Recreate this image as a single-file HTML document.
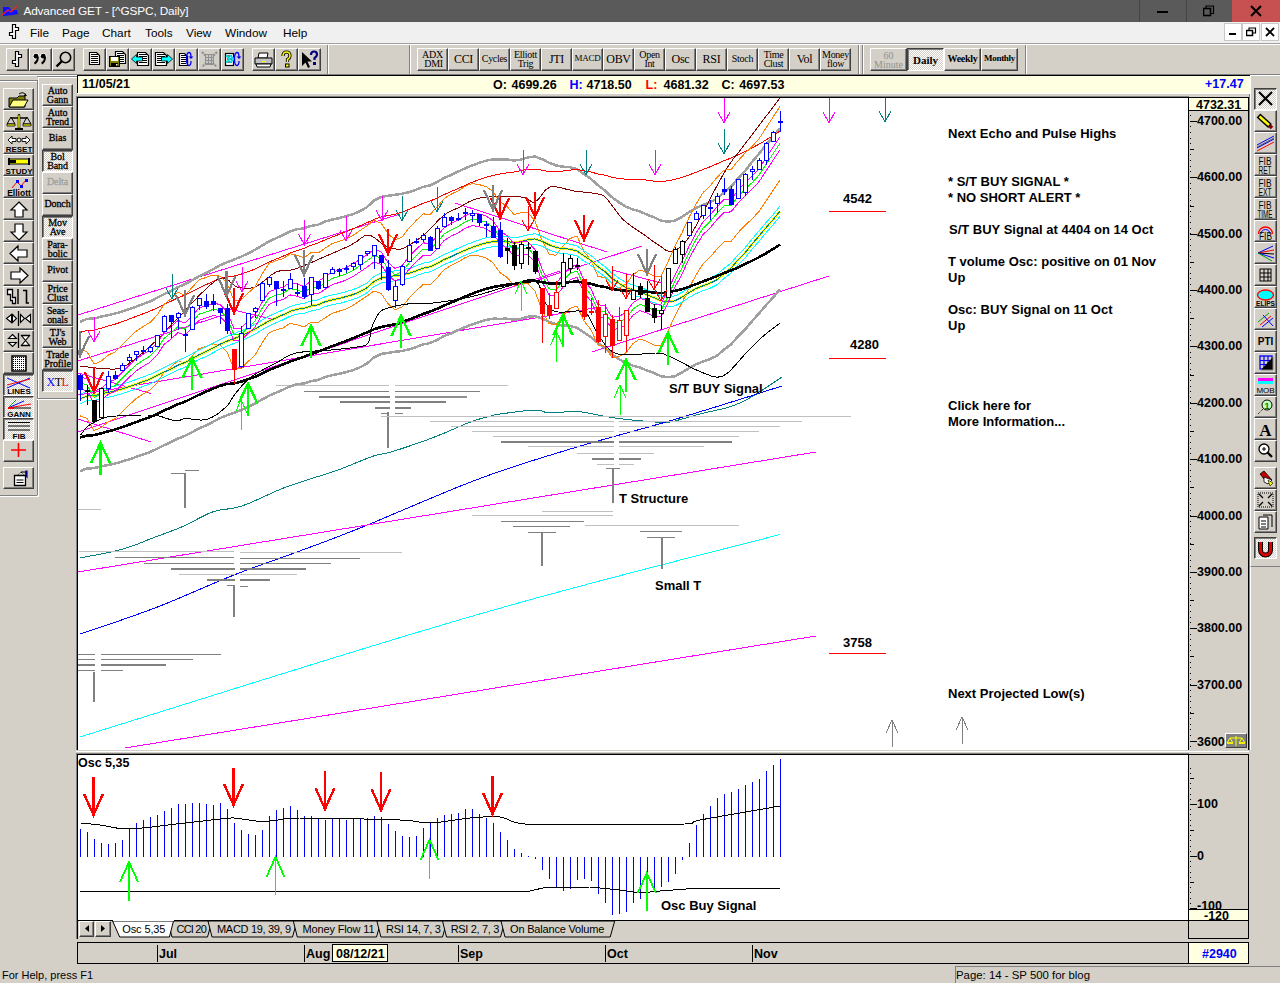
<!DOCTYPE html><html><head><meta charset="utf-8"><style>
*{margin:0;padding:0;box-sizing:border-box}
html,body{width:1280px;height:983px;overflow:hidden;background:#d4d0c8;font-family:"Liberation Sans",sans-serif;position:relative}
.ab{position:absolute}
.btn{position:absolute;background:#d4d0c8;border:1px solid;border-color:#fff #404040 #404040 #fff;box-shadow:inset -1px -1px #808080;overflow:hidden}
.prs{position:absolute;border:1px solid;border-color:#404040 #fff #fff #404040;box-shadow:inset 1px 1px #808080;background-color:#d4d0c8;background-image:repeating-conic-gradient(#fff 0 25%,transparent 0 50%);background-size:2px 2px;overflow:hidden}
.t{position:absolute;white-space:nowrap;line-height:1}
.sf{font-family:"Liberation Serif",serif}
.ic{position:absolute;left:0;top:0}
</style></head><body>
<div class="ab" style="left:0px;top:0px;width:1280px;height:22px;background:#5a5a5a;"></div>
<svg class="ab" style="left:2px;top:5px" width="18" height="12" viewBox="0 0 18 12"><path d="M1 2 L7 2 L9 5 L15 5 L16 9 L11 10 L1 11Z" fill="#1010ff"/><path d="M0 10 L6 5 L9 7 L15 1" stroke="#ff2020" stroke-width="1.2" fill="none"/></svg>
<div class="t" style="left:23.4px;top:5.5px;font-size:11.8px;color:#fff;letter-spacing:-0.12px">Advanced GET - [^GSPC, Daily]</div>
<div class="ab" style="left:1139px;top:0;width:1px;height:22px;background:#444"></div>
<div class="ab" style="left:1186px;top:0;width:1px;height:22px;background:#444"></div>
<div class="ab" style="left:1232px;top:0px;width:48px;height:22px;background:#c75050;"></div>
<div class="ab" style="left:1157px;top:11px;width:11px;height:2px;background:#000;"></div>
<svg class="ab" style="left:1203px;top:5px" width="12" height="12"><rect x="0.5" y="3.5" width="7" height="7" fill="none" stroke="#000" stroke-width="1.6"/><path d="M3 3 V1 H10.5 V8.5 H8" fill="none" stroke="#000" stroke-width="1.2"/></svg>
<svg class="ab" style="left:1250px;top:5px" width="12" height="12"><path d="M1 1 L11 11 M11 1 L1 11" stroke="#000" stroke-width="2"/></svg>
<div class="ab" style="left:0px;top:22px;width:1280px;height:21px;background:#f0f0f0;"></div>
<svg class="ab" style="left:6px;top:23px" width="16" height="18" viewBox="0 0 16 18"><path d="M6.5 1.5H9.5V4.5H12.5V7.5H9.5V15.5H6.5V12.5H3.5V9.5H6.5Z" fill="#fff" stroke="#000" stroke-width="1.2"/></svg>
<div class="t" style="left:30px;top:27.5px;font-size:11.8px;color:#000;">File</div>
<div class="t" style="left:62px;top:27.5px;font-size:11.8px;color:#000;">Page</div>
<div class="t" style="left:102px;top:27.5px;font-size:11.8px;color:#000;">Chart</div>
<div class="t" style="left:145px;top:27.5px;font-size:11.8px;color:#000;">Tools</div>
<div class="t" style="left:186px;top:27.5px;font-size:11.8px;color:#000;">View</div>
<div class="t" style="left:225px;top:27.5px;font-size:11.8px;color:#000;">Window</div>
<div class="t" style="left:283px;top:27.5px;font-size:11.8px;color:#000;">Help</div>
<div class="ab" style="left:1224px;top:23px;width:18px;height:18px;background:#fff;border:1px solid #c8c8c8"></div>
<div class="ab" style="left:1242px;top:23px;width:18px;height:18px;background:#fff;border:1px solid #c8c8c8"></div>
<div class="ab" style="left:1261px;top:23px;width:18px;height:18px;background:#fff;border:1px solid #c8c8c8"></div>
<div class="ab" style="left:1229px;top:33px;width:7px;height:2px;background:#000;"></div>
<svg class="ab" style="left:1246px;top:27px" width="11" height="11"><rect x="0.5" y="3.5" width="6" height="5" fill="none" stroke="#000" stroke-width="1.5"/><path d="M3 3V1H9.5V6H7" fill="none" stroke="#000" stroke-width="1.2"/></svg>
<svg class="ab" style="left:1265px;top:27px" width="11" height="11"><path d="M1 1L9 9M9 1L1 9" stroke="#000" stroke-width="1.8"/></svg>
<div class="ab" style="left:0px;top:43px;width:1280px;height:1px;background:#a0a0a0;"></div>
<div class="ab" style="left:0px;top:44px;width:1280px;height:1px;background:#fff;"></div>
<div class="ab" style="left:0px;top:74px;width:1280px;height:1px;background:#808080;"></div>
<div class="ab" style="left:327px;top:45px;width:1px;height:29px;background:#808080;"></div>
<div class="ab" style="left:328px;top:45px;width:1px;height:29px;background:#fff;"></div>
<div class="ab" style="left:409px;top:45px;width:1px;height:29px;background:#808080;"></div>
<div class="ab" style="left:410px;top:45px;width:1px;height:29px;background:#fff;"></div>
<div class="ab" style="left:858px;top:45px;width:1px;height:29px;background:#808080;"></div>
<div class="ab" style="left:859px;top:45px;width:1px;height:29px;background:#fff;"></div>
<div class="ab" style="left:862px;top:45px;width:1px;height:29px;background:#808080;"></div>
<div class="ab" style="left:863px;top:45px;width:1px;height:29px;background:#fff;"></div>
<div class="ab" style="left:1025px;top:45px;width:1px;height:29px;background:#808080;"></div>
<div class="ab" style="left:1026px;top:45px;width:1px;height:29px;background:#fff;"></div>
<div class="btn" style="left:6px;top:48px;width:23px;height:23px"><svg class="ic" style="left:0px;top:0px" width="21" height="21" viewBox="0 0 21 21"><path d="M8.5 2.5H11.5V5.5H14.5V8.5H11.5V17.5H8.5V14.5H5.5V11.5H8.5Z" fill="#fff" stroke="#000" stroke-width="1.2"/></svg></div>
<div class="btn" style="left:29px;top:48px;width:23px;height:23px"><svg class="ic" style="left:0px;top:0px" width="21" height="21" viewBox="0 0 21 21"><g stroke="#fff" stroke-width="1" opacity="0.9"><circle cx="6" cy="7.2" r="2.9" fill="none"/><circle cx="13.2" cy="7.2" r="2.9" fill="none"/></g><circle cx="6" cy="7.2" r="2.4" fill="#000"/><path d="M7.8 8 Q8 12 4.5 14.6" stroke="#000" stroke-width="2" fill="none"/><circle cx="13.2" cy="7.2" r="2.4" fill="#000"/><path d="M15 8 Q15.2 12 11.7 14.6" stroke="#000" stroke-width="2" fill="none"/></svg></div>
<div class="btn" style="left:52px;top:48px;width:23px;height:23px"><svg class="ic" style="left:0px;top:0px" width="21" height="21" viewBox="0 0 21 21"><circle cx="12.5" cy="8.5" r="5.2" fill="none" stroke="#000" stroke-width="1.6"/><path d="M9 12 L3.5 17.5" stroke="#000" stroke-width="2.4"/></svg></div>
<div class="btn" style="left:83px;top:48px;width:23px;height:23px"><svg class="ic" style="left:0px;top:0px" width="21" height="21" viewBox="0 0 21 21"><path d="M5.5 3.5H12.5L15.5 6.5V15.5H5.5Z" fill="#fff" stroke="#000" stroke-width="1.2"/><path d="M7 5.5H14" stroke="#000" stroke-width="1"/><path d="M7 7.5H14" stroke="#000" stroke-width="1"/><path d="M7 9.5H14" stroke="#000" stroke-width="1"/><path d="M7 11.5H14" stroke="#000" stroke-width="1"/><path d="M7 13.5H14" stroke="#000" stroke-width="1"/></svg></div>
<div class="btn" style="left:106px;top:48px;width:23px;height:23px"><svg class="ic" style="left:0px;top:0px" width="21" height="21" viewBox="0 0 21 21"><path d="M8.5 2.5H15.5L18.5 5.5V14.5H8.5Z" fill="#fff" stroke="#000" stroke-width="1.2"/><path d="M10 4.5H17" stroke="#000" stroke-width="1"/><path d="M10 6.5H17" stroke="#000" stroke-width="1"/><path d="M10 8.5H17" stroke="#000" stroke-width="1"/><path d="M10 10.5H17" stroke="#000" stroke-width="1"/><path d="M10 12.5H17" stroke="#000" stroke-width="1"/><rect x="2.5" y="7.5" width="10" height="10" fill="#808000" stroke="#000"/><rect x="4" y="8" width="7" height="4" fill="#fff"/><rect x="4" y="14" width="7" height="3.5" fill="#000"/><rect x="9" y="15" width="1.5" height="1.5" fill="#fff"/></svg></div>
<div class="btn" style="left:129px;top:48px;width:23px;height:23px"><svg class="ic" style="left:0px;top:0px" width="21" height="21" viewBox="0 0 21 21"><path d="M7.5 3.5H15.5L18.5 6.5V16.5H7.5Z" fill="#fff" stroke="#000" stroke-width="1.2"/><path d="M9 5.5H17" stroke="#000" stroke-width="1"/><path d="M9 7.5H17" stroke="#000" stroke-width="1"/><path d="M9 9.5H17" stroke="#000" stroke-width="1"/><path d="M9 11.5H17" stroke="#000" stroke-width="1"/><path d="M9 13.5H17" stroke="#000" stroke-width="1"/><path d="M1.5 10 L6.5 5.5 V8 H12.5 V12 H6.5 V14.5Z" fill="#00ffff" stroke="#000" stroke-width="0.8"/></svg></div>
<div class="btn" style="left:152px;top:48px;width:23px;height:23px"><svg class="ic" style="left:0px;top:0px" width="21" height="21" viewBox="0 0 21 21"><path d="M2.5 3.5H10.5L13.5 6.5V16.5H2.5Z" fill="#fff" stroke="#000" stroke-width="1.2"/><path d="M4 5.5H12" stroke="#000" stroke-width="1"/><path d="M4 7.5H12" stroke="#000" stroke-width="1"/><path d="M4 9.5H12" stroke="#000" stroke-width="1"/><path d="M4 11.5H12" stroke="#000" stroke-width="1"/><path d="M4 13.5H12" stroke="#000" stroke-width="1"/><path d="M19.5 10 L14.5 5.5 V8 H8.5 V12 H14.5 V14.5Z" fill="#00ffff" stroke="#000" stroke-width="0.8"/></svg></div>
<div class="btn" style="left:175px;top:48px;width:23px;height:23px"><svg class="ic" style="left:0px;top:0px" width="21" height="21" viewBox="0 0 21 21"><path d="M3.5 4.5H8.5L11.5 7.5V16.5H3.5Z" fill="#fff" stroke="#000" stroke-width="1.2"/><path d="M5 6.5H10" stroke="#000" stroke-width="1"/><path d="M5 8.5H10" stroke="#000" stroke-width="1"/><path d="M5 10.5H10" stroke="#000" stroke-width="1"/><path d="M5 12.5H10" stroke="#000" stroke-width="1"/><path d="M5 14.5H10" stroke="#000" stroke-width="1"/><path d="M13 3.5 Q10.5 3.5 10.5 10 Q10.5 16.5 13 16.5 Q15 16.5 15 12" stroke="#0000ff" stroke-width="1.3" fill="none"/><path d="M13 3.5 Q15 3.5 15 8" stroke="#0000ff" stroke-width="1.3" fill="none"/><path d="M12.5 7.5H17.5L15 10Z" fill="#0000ff"/></svg></div>
<div class="btn" style="left:198px;top:48px;width:23px;height:23px"><svg class="ic" style="left:0px;top:0px" width="21" height="21" viewBox="0 0 21 21"><path d="M3 3L18 18M18 3L3 18" stroke="#909090" stroke-width="2.2" stroke-dasharray="2 1"/><rect x="6" y="5" width="9" height="11" fill="#909090"/><path d="M7 7h7M7 10h7M7 13h7" stroke="#fff" stroke-dasharray="2 1"/></svg></div>
<div class="btn" style="left:221px;top:48px;width:23px;height:23px"><svg class="ic" style="left:0px;top:0px" width="21" height="21" viewBox="0 0 21 21"><rect x="3.5" y="4.5" width="8" height="12" fill="#fff" stroke="#000" stroke-width="1.2"/><path d="M5 7h5M5 10h5M5 13h5" stroke="#000"/><path d="M4 6.5l4 3.5l-4 3.5M8 6.5l4 3.5l-4 3.5" stroke="#00e0e0" stroke-width="1.8" fill="none"/><path d="M15 3.5 Q12.5 3.5 12.5 10 Q12.5 16.5 15 16.5 Q17 16.5 17 12" stroke="#0000ff" stroke-width="1.3" fill="none"/><path d="M15 3.5 Q17 3.5 17 8" stroke="#0000ff" stroke-width="1.3" fill="none"/><path d="M14.5 7.5H19.5L17 10Z" fill="#0000ff"/></svg></div>
<div class="btn" style="left:252px;top:48px;width:23px;height:23px"><svg class="ic" style="left:0px;top:0px" width="21" height="21" viewBox="0 0 21 21"><path d="M6 4h9l-1 5H5z" fill="#fff" stroke="#000"/><path d="M2 9h17v6H2z" fill="#c0c0c0" stroke="#000"/><path d="M3 15h15l-1 3H4z" fill="#fff" stroke="#000"/><rect x="9" y="12" width="4" height="1" fill="#ff0"/></svg></div>
<div class="btn" style="left:275px;top:48px;width:23px;height:23px"><svg class="ic" style="left:0px;top:0px" width="21" height="21" viewBox="0 0 21 21"><path d="M7 7 Q7 3 10.5 3 Q14 3 14 7 Q14 9 11.5 10.5 V13" stroke="#000" stroke-width="3.2" fill="none"/><path d="M7 7 Q7 3 10.5 3 Q14 3 14 7 Q14 9 11.5 10.5 V13" stroke="#ffff00" stroke-width="1.5" fill="none"/><rect x="9.5" y="15" width="3.5" height="3" fill="#ffff00" stroke="#000"/></svg></div>
<div class="btn" style="left:298px;top:48px;width:23px;height:23px"><svg class="ic" style="left:0px;top:0px" width="21" height="21" viewBox="0 0 21 21"><path d="M3 3V17L6.5 13.5L9 19L11 18L8.5 12.5H13Z" fill="#000"/><path d="M12 6 Q12 2.5 15 2.5 Q18 2.5 18 5.5 Q18 7.5 15.5 9 V11" stroke="#000080" stroke-width="2.2" fill="none"/><rect x="14" y="13" width="3" height="3" fill="#000080"/></svg></div>
<div class="btn" style="left:417px;top:48px;width:31px;height:23px"><div class="t sf" style="left:0;top:1px;width:29px;text-align:center;font-size:10px;line-height:9px;letter-spacing:-0.3px">ADX<br>&nbsp;DMI</div></div>
<div class="btn" style="left:448px;top:48px;width:31px;height:23px"><div class="t sf" style="left:0;top:4px;width:29px;text-align:center;font-size:12px;letter-spacing:-0.3px">CCI</div></div>
<div class="btn" style="left:479px;top:48px;width:31px;height:23px"><div class="t sf" style="left:0;top:5px;width:29px;text-align:center;font-size:10px;letter-spacing:-0.3px">Cycles</div></div>
<div class="btn" style="left:510px;top:48px;width:31px;height:23px"><div class="t sf" style="left:0;top:1px;width:29px;text-align:center;font-size:10px;line-height:9px;letter-spacing:-0.3px">Elliott<br>Trig</div></div>
<div class="btn" style="left:541px;top:48px;width:31px;height:23px"><div class="t sf" style="left:0;top:4px;width:29px;text-align:center;font-size:12px;letter-spacing:-0.3px">JTI</div></div>
<div class="btn" style="left:572px;top:48px;width:31px;height:23px"><div class="t sf" style="left:0;top:5px;width:29px;text-align:center;font-size:9px;letter-spacing:-0.3px">MACD</div></div>
<div class="btn" style="left:603px;top:48px;width:31px;height:23px"><div class="t sf" style="left:0;top:4px;width:29px;text-align:center;font-size:12px;letter-spacing:-0.3px">OBV</div></div>
<div class="btn" style="left:634px;top:48px;width:31px;height:23px"><div class="t sf" style="left:0;top:1px;width:29px;text-align:center;font-size:10px;line-height:9px;letter-spacing:-0.3px">Open<br>Int</div></div>
<div class="btn" style="left:665px;top:48px;width:31px;height:23px"><div class="t sf" style="left:0;top:4px;width:29px;text-align:center;font-size:12px;letter-spacing:-0.3px">Osc</div></div>
<div class="btn" style="left:696px;top:48px;width:31px;height:23px"><div class="t sf" style="left:0;top:4px;width:29px;text-align:center;font-size:12px;letter-spacing:-0.3px">RSI</div></div>
<div class="btn" style="left:727px;top:48px;width:31px;height:23px"><div class="t sf" style="left:0;top:5px;width:29px;text-align:center;font-size:10px;letter-spacing:-0.3px">Stoch</div></div>
<div class="btn" style="left:758px;top:48px;width:31px;height:23px"><div class="t sf" style="left:0;top:1px;width:29px;text-align:center;font-size:10px;line-height:9px;letter-spacing:-0.3px">Time<br>Clust</div></div>
<div class="btn" style="left:789px;top:48px;width:31px;height:23px"><div class="t sf" style="left:0;top:4px;width:29px;text-align:center;font-size:12px;letter-spacing:-0.3px">Vol</div></div>
<div class="btn" style="left:820px;top:48px;width:31px;height:23px"><div class="t sf" style="left:0;top:1px;width:29px;text-align:center;font-size:10px;line-height:9px;letter-spacing:-0.3px">Money<br>flow</div></div>
<div class="btn" style="left:870px;top:48px;width:37px;height:23px"><div class="t sf" style="left:0;top:2px;width:35px;text-align:center;font-size:10px;line-height:9px;color:#909090">60<br>Minute</div></div>
<div class="prs" style="left:907px;top:48px;width:37px;height:23px"><div class="t sf" style="left:0;top:6px;width:35px;text-align:center;font-size:11px;font-weight:bold">Daily</div></div>
<div class="btn" style="left:944px;top:48px;width:37px;height:23px"><div class="t sf" style="left:0;top:5px;width:35px;text-align:center;font-size:10px;font-weight:bold;letter-spacing:-0.3px">Weekly</div></div>
<div class="btn" style="left:981px;top:48px;width:37px;height:23px"><div class="t sf" style="left:0;top:5px;width:35px;text-align:center;font-size:9px;font-weight:bold;letter-spacing:-0.3px">Monthly</div></div>
<div class="ab" style="left:0px;top:75px;width:77px;height:1px;background:#fff;"></div>
<div class="ab" style="left:1249px;top:75px;width:31px;height:1px;background:#fff;"></div>
<div class="ab" style="left:0px;top:80px;width:37px;height:1px;background:#808080;"></div>
<div class="ab" style="left:0px;top:81px;width:37px;height:1px;background:#fff;"></div>
<div class="ab" style="left:37px;top:80px;width:1px;height:415px;background:#808080;"></div>
<div class="ab" style="left:38px;top:81px;width:1px;height:416px;background:#fff;"></div>
<div class="ab" style="left:0px;top:495px;width:37px;height:1px;background:#808080;"></div>
<div class="ab" style="left:0px;top:496px;width:39px;height:1px;background:#fff;"></div>
<div class="ab" style="left:37px;top:76px;width:40px;height:1px;background:#808080;"></div>
<div class="ab" style="left:38px;top:77px;width:39px;height:1px;background:#fff;"></div>
<div class="ab" style="left:38px;top:77px;width:1px;height:322px;background:#fff;"></div>
<div class="ab" style="left:37px;top:398px;width:40px;height:1px;background:#808080;"></div>
<div class="ab" style="left:37px;top:399px;width:40px;height:1px;background:#fff;"></div>
<div class="btn" style="left:3px;top:88px;width:31px;height:22px"><svg class="ic" style="left:0px;top:0px" width="29" height="20" viewBox="0 0 29 20"><path d="M5 9h8l2-2h6v11H5z" fill="#808000" stroke="#000"/><path d="M5 18L9 11H24L20 18Z" fill="#ffff80" stroke="#000"/><path d="M15 5 Q19 2 22 6" stroke="#000" fill="none"/><path d="M21 4l2 3l-3 0z" fill="#000"/></svg></div>
<div class="btn" style="left:3px;top:110px;width:31px;height:22px"><svg class="ic" style="left:0px;top:0px" width="29" height="20" viewBox="0 0 29 20"><path d="M15 3V18M7 7H23" stroke="#000" stroke-width="1.5"/><path d="M14 4h2v13h-2z" fill="#ff0" stroke="#000" stroke-width="0.6"/><path d="M3 13 L7 6 L11 13Z M19 13 L23 6 L27 13Z" fill="none" stroke="#000"/><path d="M3 13h8v2H3zM19 13h8v2h-8z" fill="#ff0" stroke="#000" stroke-width="0.8"/><path d="M11 18h8" stroke="#000" stroke-width="2"/></svg></div>
<div class="btn" style="left:3px;top:132px;width:31px;height:22px"><svg class="ic" style="left:0px;top:0px" width="29" height="20" viewBox="0 0 29 20"><path d="M4 7 L8 3 V5.5 H12 V8.5 H8 V11Z M26 7 L22 3 V5.5 H18 V8.5 H22 V11Z" fill="#fff" stroke="#000" stroke-width="0.9"/><circle cx="15" cy="7" r="2" fill="#fff" stroke="#000"/><text x="15" y="19" font-family="Liberation Sans" font-weight="bold" font-size="8" text-anchor="middle">RESET</text></svg></div>
<div class="btn" style="left:3px;top:154px;width:31px;height:22px"><svg class="ic" style="left:0px;top:0px" width="29" height="20" viewBox="0 0 29 20"><rect x="5" y="4" width="20" height="5" fill="#ff0" stroke="#000"/><rect x="4" y="3" width="2" height="7" fill="#000"/><rect x="24" y="3" width="2" height="7" fill="#000"/><rect x="6" y="5" width="6" height="3" fill="#000"/><text x="15" y="19" font-family="Liberation Sans" font-weight="bold" font-size="8" text-anchor="middle">STUDY</text></svg></div>
<div class="btn" style="left:3px;top:176px;width:31px;height:22px"><svg class="ic" style="left:0px;top:0px" width="29" height="20" viewBox="0 0 29 20"><path d="M8 11 L13 5 L17 9 L22 3" stroke="#ff0000" fill="none"/><rect x="12" y="3" width="3" height="3" fill="#0000ff"/><rect x="16" y="8" width="3" height="3" fill="#0000ff"/><rect x="21" y="2" width="3" height="3" fill="#0000ff"/><text x="15" y="19" font-family="Liberation Sans" font-weight="bold" font-size="8.5" text-anchor="middle">Elliott</text></svg></div>
<div class="btn" style="left:3px;top:198px;width:31px;height:22px"><svg class="ic" style="left:0px;top:0px" width="29" height="20" viewBox="0 0 29 20"><path d="M15 3 L23 11 H19 V18 H11 V11 H7Z" fill="#fff" stroke="#000" stroke-width="1.2"/></svg></div>
<div class="btn" style="left:3px;top:220px;width:31px;height:22px"><svg class="ic" style="left:0px;top:0px" width="29" height="20" viewBox="0 0 29 20"><path d="M15 19 L23 11 H19 V3 H11 V11 H7Z" fill="#fff" stroke="#000" stroke-width="1.2"/></svg></div>
<div class="btn" style="left:3px;top:242px;width:31px;height:22px"><svg class="ic" style="left:0px;top:0px" width="29" height="20" viewBox="0 0 29 20"><path d="M6 10.5 L14 3 V7 H23 V14 H14 V18Z" fill="#fff" stroke="#000" stroke-width="1.2"/></svg></div>
<div class="btn" style="left:3px;top:264px;width:31px;height:22px"><svg class="ic" style="left:0px;top:0px" width="29" height="20" viewBox="0 0 29 20"><path d="M24 10.5 L16 3 V7 H7 V14 H16 V18Z" fill="#fff" stroke="#000" stroke-width="1.2"/></svg></div>
<div class="btn" style="left:3px;top:286px;width:31px;height:22px"><svg class="ic" style="left:0px;top:0px" width="29" height="20" viewBox="0 0 29 20"><path d="M3.5 2.5H8.5V10.5H11.5V16.5H8.5V13.5H6.5V7.5H3.5Z" fill="#fff" stroke="#000" stroke-width="1.3"/><path d="M14 2V17" stroke="#000" stroke-width="1.4"/><path d="M19 3.5H22.5V16H25" stroke="#000" stroke-width="1.6" fill="none"/></svg></div>
<div class="btn" style="left:3px;top:308px;width:31px;height:22px"><svg class="ic" style="left:0px;top:0px" width="29" height="20" viewBox="0 0 29 20"><path d="M2.5 9.5L7.5 5.5V13.5Z M8.5 5.5L12.5 9.5L8.5 13.5Z M16.5 5.5L20.5 9.5L16.5 13.5Z M26.5 5.5V13.5L21.5 9.5Z" fill="#fff" stroke="#000" stroke-width="1.1"/><path d="M14.5 2V17" stroke="#000" stroke-width="1.3"/></svg></div>
<div class="btn" style="left:3px;top:330px;width:31px;height:22px"><svg class="ic" style="left:0px;top:0px" width="29" height="20" viewBox="0 0 29 20"><path d="M8.5 3.5L12.5 7.5H4.5Z M4.5 11.5H12.5L8.5 15.5Z" fill="#fff" stroke="#000" stroke-width="1.1"/><path d="M14.5 2V17" stroke="#000" stroke-width="1.3"/><path d="M17.5 4.5H25.5L21.5 9.5L25.5 14.5H17.5L21.5 9.5Z" fill="#fff" stroke="#000" stroke-width="1.1"/><path d="M17 4.5H26M17 14.5H26" stroke="#000" stroke-width="1.3"/></svg></div>
<div class="btn" style="left:3px;top:352px;width:31px;height:22px"><svg class="ic" style="left:0px;top:0px" width="29" height="20" viewBox="0 0 29 20"><rect x="8" y="3" width="14" height="15" fill="#fff" stroke="#000" stroke-width="1.5"/><rect x="9" y="4" width="1" height="1" fill="#000"/><rect x="9" y="6" width="1" height="1" fill="#000"/><rect x="9" y="8" width="1" height="1" fill="#000"/><rect x="9" y="10" width="1" height="1" fill="#000"/><rect x="9" y="12" width="1" height="1" fill="#000"/><rect x="9" y="14" width="1" height="1" fill="#000"/><rect x="9" y="16" width="1" height="1" fill="#000"/><rect x="11" y="4" width="1" height="1" fill="#000"/><rect x="11" y="6" width="1" height="1" fill="#000"/><rect x="11" y="8" width="1" height="1" fill="#000"/><rect x="11" y="10" width="1" height="1" fill="#000"/><rect x="11" y="12" width="1" height="1" fill="#000"/><rect x="11" y="14" width="1" height="1" fill="#000"/><rect x="11" y="16" width="1" height="1" fill="#000"/><rect x="13" y="4" width="1" height="1" fill="#000"/><rect x="13" y="6" width="1" height="1" fill="#000"/><rect x="13" y="8" width="1" height="1" fill="#000"/><rect x="13" y="10" width="1" height="1" fill="#000"/><rect x="13" y="12" width="1" height="1" fill="#000"/><rect x="13" y="14" width="1" height="1" fill="#000"/><rect x="13" y="16" width="1" height="1" fill="#000"/><rect x="15" y="4" width="1" height="1" fill="#000"/><rect x="15" y="6" width="1" height="1" fill="#000"/><rect x="15" y="8" width="1" height="1" fill="#000"/><rect x="15" y="10" width="1" height="1" fill="#000"/><rect x="15" y="12" width="1" height="1" fill="#000"/><rect x="15" y="14" width="1" height="1" fill="#000"/><rect x="15" y="16" width="1" height="1" fill="#000"/><rect x="17" y="4" width="1" height="1" fill="#000"/><rect x="17" y="6" width="1" height="1" fill="#000"/><rect x="17" y="8" width="1" height="1" fill="#000"/><rect x="17" y="10" width="1" height="1" fill="#000"/><rect x="17" y="12" width="1" height="1" fill="#000"/><rect x="17" y="14" width="1" height="1" fill="#000"/><rect x="17" y="16" width="1" height="1" fill="#000"/><rect x="19" y="4" width="1" height="1" fill="#000"/><rect x="19" y="6" width="1" height="1" fill="#000"/><rect x="19" y="8" width="1" height="1" fill="#000"/><rect x="19" y="10" width="1" height="1" fill="#000"/><rect x="19" y="12" width="1" height="1" fill="#000"/><rect x="19" y="14" width="1" height="1" fill="#000"/><rect x="19" y="16" width="1" height="1" fill="#000"/><rect x="21" y="4" width="1" height="1" fill="#000"/><rect x="21" y="6" width="1" height="1" fill="#000"/><rect x="21" y="8" width="1" height="1" fill="#000"/><rect x="21" y="10" width="1" height="1" fill="#000"/><rect x="21" y="12" width="1" height="1" fill="#000"/><rect x="21" y="14" width="1" height="1" fill="#000"/><rect x="21" y="16" width="1" height="1" fill="#000"/></svg></div>
<div class="prs" style="left:3px;top:374px;width:31px;height:22px"><svg class="ic" style="left:0px;top:0px" width="29" height="20" viewBox="0 0 29 20"><path d="M3 3 L26 13 M3 13 L26 3" stroke="#0000ff"/><path d="M3 10 L26 4" stroke="#ff0000"/><text x="15" y="19" font-family="Liberation Sans" font-weight="bold" font-size="8" text-anchor="middle">LINES</text></svg></div>
<div class="prs" style="left:3px;top:396px;width:31px;height:22px"><svg class="ic" style="left:0px;top:0px" width="29" height="20" viewBox="0 0 29 20"><path d="M4 11 L12 3 M4 11 L20 4 M4 11 L27 7 M4 11 H27" stroke-width="1.2"/><path d="M4 11 L12 3" stroke="#00a000"/><path d="M4 11 L20 4" stroke="#0000ff"/><path d="M4 11 L27 7" stroke="#ff0000"/><path d="M4 11 H27" stroke="#000"/><path d="M4 11 H10" stroke="#ff0000" stroke-width="2"/><text x="15" y="19.5" font-family="Liberation Sans" font-weight="bold" font-size="8" text-anchor="middle">GANN</text></svg></div>
<div class="prs" style="left:3px;top:418px;width:31px;height:22px"><svg class="ic" style="left:0px;top:0px" width="29" height="20" viewBox="0 0 29 20"><path d="M4 3.5H26M4 7H26M4 11H26" stroke="#000" stroke-width="1.2"/><text x="15" y="19.5" font-family="Liberation Sans" font-weight="bold" font-size="8" text-anchor="middle">FIB</text></svg></div>
<div class="btn" style="left:3px;top:440px;width:31px;height:22px"><svg class="ic" style="left:0px;top:0px" width="29" height="20" viewBox="0 0 29 20"><path d="M14.5 2V16M7 9H22" stroke="#ff0000" stroke-width="1.6"/></svg></div>
<div class="btn" style="left:3px;top:467px;width:31px;height:22px"><svg class="ic" style="left:0px;top:0px" width="29" height="20" viewBox="0 0 29 20"><path d="M10.5 7.5h11v10h-11z" fill="#fff" stroke="#000" stroke-width="1.3"/><path d="M12.5 12h7M12.5 14.5h7" stroke="#000"/><path d="M13 8 L17 4 L21 8" fill="none" stroke="#000" stroke-dasharray="1 1"/><path d="M17 4h5v3" fill="none" stroke="#000"/><path d="M23 3 V9 L22 8V3Z" fill="#000080" stroke="#000080" stroke-width="1.2"/></svg></div>
<div class="btn" style="left:42px;top:84px;width:31px;height:22px"><div class="t sf" style="left:0;top:2px;width:29px;text-align:center;font-size:10px;line-height:8.5px;letter-spacing:-0.1px;color:#000;-webkit-text-stroke:0.3px #000">Auto<br>Gann</div></div>
<div class="btn" style="left:42px;top:106px;width:31px;height:22px"><div class="t sf" style="left:0;top:2px;width:29px;text-align:center;font-size:10px;line-height:8.5px;letter-spacing:-0.1px;color:#000;-webkit-text-stroke:0.3px #000">Auto<br>Trend</div></div>
<div class="btn" style="left:42px;top:128px;width:31px;height:22px"><div class="t sf" style="left:0;top:5px;width:29px;text-align:center;font-size:10px;line-height:8.5px;letter-spacing:-0.1px;color:#000;-webkit-text-stroke:0.3px #000">Bias</div></div>
<div class="prs" style="left:42px;top:150px;width:31px;height:22px"><div class="t sf" style="left:0;top:2px;width:29px;text-align:center;font-size:10px;line-height:8.5px;letter-spacing:-0.1px;color:#000;-webkit-text-stroke:0.3px #000">Bol<br>Band</div></div>
<div class="btn" style="left:42px;top:172px;width:31px;height:22px"><div class="t sf" style="left:0;top:5px;width:29px;text-align:center;font-size:10px;line-height:8.5px;letter-spacing:-0.1px;color:#a0a0a0;-webkit-text-stroke:0.3px #a0a0a0">Delta</div></div>
<div class="btn" style="left:42px;top:194px;width:31px;height:22px"><div class="t sf" style="left:0;top:5px;width:29px;text-align:center;font-size:10px;line-height:8.5px;letter-spacing:-0.1px;color:#000;-webkit-text-stroke:0.3px #000">Donch</div></div>
<div class="prs" style="left:42px;top:216px;width:31px;height:22px"><div class="t sf" style="left:0;top:2px;width:29px;text-align:center;font-size:10px;line-height:8.5px;letter-spacing:-0.1px;color:#000;-webkit-text-stroke:0.3px #000">Mov<br>Ave</div></div>
<div class="btn" style="left:42px;top:238px;width:31px;height:22px"><div class="t sf" style="left:0;top:2px;width:29px;text-align:center;font-size:10px;line-height:8.5px;letter-spacing:-0.1px;color:#000;-webkit-text-stroke:0.3px #000">Para-<br>bolic</div></div>
<div class="btn" style="left:42px;top:260px;width:31px;height:22px"><div class="t sf" style="left:0;top:5px;width:29px;text-align:center;font-size:10px;line-height:8.5px;letter-spacing:-0.1px;color:#000;-webkit-text-stroke:0.3px #000">Pivot</div></div>
<div class="btn" style="left:42px;top:282px;width:31px;height:22px"><div class="t sf" style="left:0;top:2px;width:29px;text-align:center;font-size:10px;line-height:8.5px;letter-spacing:-0.1px;color:#000;-webkit-text-stroke:0.3px #000">Price<br>Clust</div></div>
<div class="btn" style="left:42px;top:304px;width:31px;height:22px"><div class="t sf" style="left:0;top:2px;width:29px;text-align:center;font-size:10px;line-height:8.5px;letter-spacing:-0.1px;color:#000;-webkit-text-stroke:0.3px #000">Seas-<br>onals</div></div>
<div class="btn" style="left:42px;top:326px;width:31px;height:22px"><div class="t sf" style="left:0;top:2px;width:29px;text-align:center;font-size:10px;line-height:8.5px;letter-spacing:-0.1px;color:#000;-webkit-text-stroke:0.3px #000">TJ's<br>Web</div></div>
<div class="btn" style="left:42px;top:348px;width:31px;height:22px"><div class="t sf" style="left:0;top:2px;width:29px;text-align:center;font-size:10px;line-height:8.5px;letter-spacing:-0.1px;color:#000;-webkit-text-stroke:0.3px #000">Trade<br>Profile</div></div>
<div class="prs" style="left:42px;top:370px;width:31px;height:22px"><div class="t sf" style="left:0;top:5px;width:29px;text-align:center;font-size:12px;letter-spacing:-0.5px"><span style="color:#0000ff">X</span>T<span style="color:#ff0000">L</span></div></div>
<div class="ab" style="left:1249px;top:75px;width:1px;height:675px;background:#808080"></div>
<div class="ab" style="left:1250px;top:75px;width:30px;height:492px;border-top:1px solid #fff;border-left:1px solid #fff;border-bottom:1px solid #808080"></div>
<div class="prs" style="left:1254px;top:88px;width:23px;height:22px"><svg class="ic" style="left:0px;top:0px" width="21" height="20" viewBox="0 0 21 20"><path d="M4 3L17 16M17 3L4 16" stroke="#000" stroke-width="2.2"/></svg></div>
<div class="btn" style="left:1254px;top:110px;width:23px;height:22px"><svg class="ic" style="left:0px;top:0px" width="21" height="20" viewBox="0 0 21 20"><path d="M3.5 4.5 L15 15" stroke="#000" stroke-width="5.5"/><path d="M4.5 5.5 L14 14" stroke="#ff0" stroke-width="2.5"/><path d="M14.5 14.5 L17 17" stroke="#800000" stroke-width="3.5"/></svg></div>
<div class="btn" style="left:1254px;top:132px;width:23px;height:22px"><svg class="ic" style="left:0px;top:0px" width="21" height="20" viewBox="0 0 21 20"><path d="M2 12L19 3M2 15L19 6" stroke="#0000ff"/><path d="M2 18L19 9" stroke="#ff0000"/><path d="M2 14 L19 5" stroke="#000" stroke-width="0.5"/></svg></div>
<div class="btn" style="left:1254px;top:154px;width:23px;height:22px"><svg class="ic" style="left:0px;top:0px" width="21" height="20" viewBox="0 0 21 20"><text x="3.5" y="9.5" font-family="Liberation Sans" font-size="10" textLength="13" lengthAdjust="spacingAndGlyphs">FIB</text><text x="3.5" y="18.5" font-family="Liberation Sans" font-size="10" textLength="13" lengthAdjust="spacingAndGlyphs">RET</text></svg></div>
<div class="btn" style="left:1254px;top:176px;width:23px;height:22px"><svg class="ic" style="left:0px;top:0px" width="21" height="20" viewBox="0 0 21 20"><text x="3.5" y="9.5" font-family="Liberation Sans" font-size="10" textLength="13" lengthAdjust="spacingAndGlyphs">FIB</text><text x="3.5" y="18.5" font-family="Liberation Sans" font-size="10" textLength="13" lengthAdjust="spacingAndGlyphs">EXT</text></svg></div>
<div class="btn" style="left:1254px;top:198px;width:23px;height:22px"><svg class="ic" style="left:0px;top:0px" width="21" height="20" viewBox="0 0 21 20"><text x="3.5" y="9.5" font-family="Liberation Sans" font-size="10" textLength="13" lengthAdjust="spacingAndGlyphs">FIB</text><text x="2.5" y="18.5" font-family="Liberation Sans" font-size="10" textLength="15" lengthAdjust="spacingAndGlyphs">TIME</text></svg></div>
<div class="btn" style="left:1254px;top:220px;width:23px;height:22px"><svg class="ic" style="left:0px;top:0px" width="21" height="20" viewBox="0 0 21 20"><path d="M3.5 13 A7 7 0 0 1 17.5 13" stroke="#ff0000" fill="none" stroke-width="1.3"/><path d="M6 13 A4.5 4.5 0 0 1 15 13" stroke="#0000ff" fill="none"/><text x="4" y="19" font-family="Liberation Sans" font-size="10" textLength="13" lengthAdjust="spacingAndGlyphs">FIB</text></svg></div>
<div class="btn" style="left:1254px;top:242px;width:23px;height:22px"><svg class="ic" style="left:0px;top:0px" width="21" height="20" viewBox="0 0 21 20"><path d="M3 10L18 3" stroke="#0000ff"/><path d="M3 10L19 7" stroke="#ff0000"/><path d="M3 10L19 11" stroke="#000"/><path d="M3 10L19 15" stroke="#0000ff"/><path d="M3 10L17 18" stroke="#00a000"/></svg></div>
<div class="btn" style="left:1254px;top:264px;width:23px;height:22px"><svg class="ic" style="left:0px;top:0px" width="21" height="20" viewBox="0 0 21 20"><rect x="5" y="4" width="11" height="12" fill="none" stroke="#000"/><path d="M5 8H16M5 12H16M9 4V16M13 4V16" stroke="#000"/></svg></div>
<div class="btn" style="left:1254px;top:286px;width:23px;height:22px"><svg class="ic" style="left:0px;top:0px" width="21" height="20" viewBox="0 0 21 20"><ellipse cx="10.5" cy="8" rx="8" ry="5" fill="#00ffff" stroke="#ff0000" stroke-width="1.3"/><text x="10.5" y="18.5" font-family="Liberation Sans" font-weight="bold" font-size="6.5" text-anchor="middle">ELIPS</text></svg></div>
<div class="btn" style="left:1254px;top:308px;width:23px;height:22px"><svg class="ic" style="left:0px;top:0px" width="21" height="20" viewBox="0 0 21 20"><path d="M3 13L14 4M5 16L16 7M7 18L18 9" stroke-width="1"/><path d="M3 13L14 4" stroke="#00a000"/><path d="M5 16L16 7" stroke="#ff0000"/><path d="M7 18L18 9" stroke="#0000ff"/><path d="M8 6L18 17" stroke="#0000ff"/></svg></div>
<div class="btn" style="left:1254px;top:330px;width:23px;height:22px"><svg class="ic" style="left:0px;top:0px" width="21" height="20" viewBox="0 0 21 20"><text x="10.5" y="14" font-family="Liberation Sans" font-weight="bold" font-size="10" text-anchor="middle">PTI</text></svg></div>
<div class="btn" style="left:1254px;top:352px;width:23px;height:22px"><svg class="ic" style="left:0px;top:0px" width="21" height="20" viewBox="0 0 21 20"><rect x="5" y="3" width="12" height="13" fill="none" stroke="#0000ff" stroke-width="1.3"/><path d="M5 7.5H17M5 11.5H17M9 3V16M13 3V16" stroke="#0000ff" stroke-width="1.2"/><path d="M6 17H18V4" stroke="#808080"/></svg></div>
<div class="btn" style="left:1254px;top:374px;width:23px;height:22px"><svg class="ic" style="left:0px;top:0px" width="21" height="20" viewBox="0 0 21 20"><rect x="3" y="3" width="15" height="3" fill="#ff00ff"/><rect x="3" y="6" width="15" height="3" fill="#00ffff"/><text x="10.5" y="18" font-family="Liberation Sans" font-size="8" text-anchor="middle">MOB</text></svg></div>
<div class="btn" style="left:1254px;top:396px;width:23px;height:22px"><svg class="ic" style="left:0px;top:0px" width="21" height="20" viewBox="0 0 21 20"><circle cx="12" cy="8" r="5" fill="#c0ffc0" stroke="#000"/><text x="12" y="12" font-family="Liberation Sans" font-weight="bold" font-size="9" fill="#008000" text-anchor="middle">1</text><path d="M8 12 L3 17" stroke="#000" stroke-dasharray="1 1"/></svg></div>
<div class="btn" style="left:1254px;top:418px;width:23px;height:22px"><svg class="ic" style="left:0px;top:0px" width="21" height="20" viewBox="0 0 21 20"><text x="10.5" y="17" font-family="Liberation Serif" font-weight="bold" font-size="17" text-anchor="middle">A</text></svg></div>
<div class="btn" style="left:1254px;top:440px;width:23px;height:22px"><svg class="ic" style="left:0px;top:0px" width="21" height="20" viewBox="0 0 21 20"><circle cx="9" cy="8" r="5" fill="#fff" stroke="#000" stroke-width="1.3"/><path d="M7 8H11M9 6V10" stroke="#000"/><path d="M12.5 11.5L17 16" stroke="#000" stroke-width="2.3"/></svg></div>
<div class="btn" style="left:1254px;top:467px;width:23px;height:22px"><svg class="ic" style="left:0px;top:0px" width="21" height="20" viewBox="0 0 21 20"><path d="M5 6 L9 3 L17 12 L13 16Z" fill="#c00000" stroke="#000" stroke-width="0.8"/><path d="M9 9 L17 12 L13 16 L9 14Z" fill="#fff" stroke="#000" stroke-width="0.8"/><path d="M13 12 L18 15 L15 18Z" fill="#ff0" stroke="#000" stroke-width="0.6"/></svg></div>
<div class="btn" style="left:1254px;top:489px;width:23px;height:22px"><svg class="ic" style="left:0px;top:0px" width="21" height="20" viewBox="0 0 21 20"><rect x="3" y="3" width="15" height="14" fill="none" stroke="#000" stroke-dasharray="1 1"/><path d="M4 4L8 8M17 4L13 8M4 16L8 12M17 16L13 12" stroke="#000" stroke-width="1.3"/></svg></div>
<div class="btn" style="left:1254px;top:511px;width:23px;height:22px"><svg class="ic" style="left:0px;top:0px" width="21" height="20" viewBox="0 0 21 20"><path d="M4 5h9v12H4z" fill="#fff" stroke="#000"/><path d="M8 3h9v12" fill="none" stroke="#000"/><path d="M6 9h5M6 12h5M6 15h5" stroke="#000"/></svg></div>
<div class="prs" style="left:1254px;top:537px;width:23px;height:22px"><svg class="ic" style="left:0px;top:0px" width="21" height="20" viewBox="0 0 21 20"><path d="M5.5 4V12 A5 5 0 0 0 15.5 12V4" stroke="#000" stroke-width="5" fill="none"/><path d="M5.5 4V12 A5 5 0 0 0 15.5 12V4" stroke="#e00000" stroke-width="3" fill="none"/></svg></div>
<div class="ab" style="left:77px;top:75px;width:1173px;height:18px;background:#ffffe1;border-top:1px solid #000;border-left:1px solid #000"></div>
<div class="ab" style="left:77px;top:93px;width:1173px;height:1px;background:#fff;"></div>
<div class="t" style="left:82px;top:78px;font-size:12.5px;color:#000;font-weight:bold;">11/05/21</div>
<div class="t" style="left:493px;top:78.5px;font-size:12.5px;color:#000;font-weight:bold;">O:</div>
<div class="t" style="left:511.5px;top:78.5px;font-size:12.5px;color:#000;font-weight:bold;">4699.26</div>
<div class="t" style="left:569.5px;top:78.5px;font-size:12.5px;color:#0000ff;font-weight:bold;">H:</div>
<div class="t" style="left:586.5px;top:78.5px;font-size:12.5px;color:#000;font-weight:bold;">4718.50</div>
<div class="t" style="left:645.5px;top:78.5px;font-size:12.5px;color:#ff0000;font-weight:bold;">L:</div>
<div class="t" style="left:663.5px;top:78.5px;font-size:12.5px;color:#000;font-weight:bold;">4681.32</div>
<div class="t" style="left:721.5px;top:78.5px;font-size:12.5px;color:#000;font-weight:bold;">C:</div>
<div class="t" style="left:739.3px;top:78.5px;font-size:12.5px;color:#000;font-weight:bold;">4697.53</div>
<div class="t" style="left:1205px;top:78px;font-size:12.5px;color:#0000ff;font-weight:bold;">+17.47</div>
<div class="ab" style="left:76px;top:96px;width:1113px;height:1px;background:#808080;"></div>
<div class="ab" style="left:76px;top:96px;width:1px;height:654px;background:#808080;"></div>
<div class="ab" style="left:77px;top:97px;width:1112px;height:653px;background:#fff;border-top:1px solid #000;border-left:1px solid #000"></div>
<svg class="ab" style="left:78px;top:98px" width="1110" height="651" viewBox="78 98 1110 651" shape-rendering="crispEdges"><polyline points="80.0,558.0 84.0,557.2 89.6,556.1 96.2,554.9 103.1,553.5 109.6,552.2 115.0,551.0 119.3,549.9 123.0,548.9 126.2,547.9 129.3,547.0 132.1,546.0 135.0,545.0 137.6,544.1 139.7,543.2 141.7,542.4 143.9,541.5 146.5,540.4 150.0,539.0 154.5,537.3 159.8,535.4 165.6,533.2 171.6,531.0 177.5,528.7 183.0,526.4 188.2,524.0 193.3,521.4 198.2,518.7 203.2,516.1 208.1,513.7 213.0,511.8 217.8,510.5 222.4,509.6 226.9,509.1 231.6,508.4 236.6,507.5 242.0,506.0 248.0,503.7 254.6,500.9 261.5,497.8 268.4,494.6 275.0,491.6 281.0,489.0 286.4,486.9 291.5,485.1 296.3,483.5 300.9,482.0 305.4,480.5 310.0,479.0 314.4,477.6 318.6,476.3 322.7,475.1 327.0,473.8 331.5,472.3 336.5,470.6 342.3,468.4 348.8,465.8 355.6,463.0 362.3,460.3 368.4,457.9 373.6,456.0 377.4,454.8 380.0,454.3 382.1,454.0 384.2,453.7 387.0,453.1 391.0,452.0 396.5,450.3 403.0,448.2 410.1,445.8 417.6,443.2 425.0,440.6 432.0,438.0 438.8,435.3 445.9,432.4 452.8,429.4 459.5,426.5 465.6,423.9 471.0,421.8 475.6,420.2 479.5,419.0 482.9,418.0 485.9,417.3 488.5,416.6 491.0,416.0 492.8,415.5 493.9,415.1 494.6,414.9 495.5,414.7 497.1,414.4 500.0,414.0 504.6,413.4 510.5,412.6 517.1,411.7 523.9,410.9 530.0,410.3 535.0,410.0 538.5,410.1 541.0,410.6 542.9,411.3 544.8,412.1 547.0,412.7 550.0,413.0 553.8,412.9 558.0,412.6 562.6,412.1 567.5,411.7 572.7,411.4 578.0,411.6 583.6,412.2 589.6,413.2 595.8,414.5 602.1,415.8 608.6,417.0 615.0,418.0 621.8,418.9 629.0,419.7 636.4,420.4 643.4,421.1 649.7,421.6 655.0,422.0 658.8,422.3 661.3,422.6 663.1,422.8 664.8,422.7 666.9,422.5 670.0,422.0 674.0,421.2 678.5,420.0 683.4,418.7 688.7,417.2 694.2,415.6 700.0,414.0 706.1,412.5 712.5,411.1 719.2,409.6 726.1,407.9 733.1,405.7 740.0,403.0 747.4,399.2 755.4,394.5 763.5,389.3 771.0,384.3 777.4,380.0 782.0,377.0" fill="none" stroke="#008080" stroke-width="1" stroke-linejoin="round" />
<polyline points="80.0,634.0 88.1,631.3 99.3,627.5 112.6,623.1 126.9,618.1 141.4,613.0 155.0,608.0 168.1,602.8 181.6,597.1 195.2,591.3 208.7,585.5 221.7,580.0 234.0,575.0 245.4,570.6 256.2,566.6 266.5,562.9 276.6,559.4 286.7,555.8 297.0,552.0 306.9,548.3 316.0,545.0 325.2,541.6 335.1,537.8 346.4,533.4 360.0,528.0 376.6,521.2 395.7,513.1 416.2,504.4 437.2,495.6 457.5,487.2 476.0,480.0 492.5,473.9 507.9,468.6 522.6,463.8 537.0,459.2 551.7,454.7 567.0,450.0 583.3,445.1 600.4,440.3 617.7,435.5 634.7,430.8 651.0,426.3 666.0,422.0 679.9,417.9 693.0,413.9 705.4,410.1 717.1,406.5 727.9,403.1 738.0,400.0 747.5,397.0 756.4,394.2 764.5,391.6 771.6,389.3 777.5,387.4 782.0,386.0" fill="none" stroke="#0000ff" stroke-width="1" stroke-linejoin="round" />
<line x1="78" y1="572" x2="816" y2="452" stroke="#ff00ff" stroke-width="1"/>
<polyline points="80.0,737.0 124.1,723.2 186.1,703.8 259.0,681.0 336.1,657.1 410.7,634.3 476.0,615.0 535.5,598.2 595.4,582.1 652.8,567.1 704.6,553.8 748.0,542.8 780.0,534.5" fill="none" stroke="#00ffff" stroke-width="1" stroke-linejoin="round" />
<line x1="125" y1="748" x2="816" y2="636" stroke="#ff00ff" stroke-width="1"/>
<line x1="78" y1="654.5" x2="95" y2="654.5" stroke="#808080" stroke-width="1"/>
<line x1="101" y1="654.5" x2="221" y2="654.5" stroke="#808080" stroke-width="1"/>
<line x1="78" y1="659.5" x2="95" y2="659.5" stroke="#808080" stroke-width="1"/>
<line x1="101" y1="659.5" x2="193" y2="659.5" stroke="#808080" stroke-width="1"/>
<line x1="78" y1="665.0" x2="95" y2="665.0" stroke="#808080" stroke-width="2"/>
<line x1="101" y1="665.0" x2="166" y2="665.0" stroke="#808080" stroke-width="2"/>
<line x1="78" y1="670.5" x2="95" y2="670.5" stroke="#808080" stroke-width="1"/>
<line x1="101" y1="670.5" x2="123" y2="670.5" stroke="#808080" stroke-width="1"/>
<line x1="93.5" y1="672" x2="93.5" y2="702" stroke="#808080" stroke-width="2"/>
<line x1="171" y1="473.5" x2="185" y2="473.5" stroke="#808080" stroke-width="1"/>
<line x1="185" y1="470.5" x2="199" y2="470.5" stroke="#808080" stroke-width="1"/>
<line x1="185.0" y1="473" x2="185.0" y2="508" stroke="#808080" stroke-width="2"/>
<line x1="78" y1="509.5" x2="101" y2="509.5" stroke="#c0c0c0" stroke-width="1"/>
<line x1="79" y1="551.5" x2="234" y2="551.5" stroke="#c0c0c0" stroke-width="1"/>
<line x1="240" y1="552.5" x2="402" y2="552.5" stroke="#c0c0c0" stroke-width="1"/>
<line x1="115" y1="557.5" x2="234" y2="557.5" stroke="#808080" stroke-width="1"/>
<line x1="240" y1="558.5" x2="360" y2="558.5" stroke="#808080" stroke-width="1"/>
<line x1="144" y1="563.5" x2="234" y2="563.5" stroke="#808080" stroke-width="1"/>
<line x1="240" y1="563.5" x2="331" y2="563.5" stroke="#808080" stroke-width="1"/>
<line x1="171" y1="568.5" x2="235" y2="568.5" stroke="#808080" stroke-width="2"/>
<line x1="240" y1="568.5" x2="306" y2="568.5" stroke="#808080" stroke-width="2"/>
<line x1="179" y1="574.5" x2="235" y2="574.5" stroke="#c0c0c0" stroke-width="1"/>
<line x1="240" y1="574.5" x2="297" y2="574.5" stroke="#c0c0c0" stroke-width="1"/>
<line x1="207" y1="580.0" x2="235" y2="580.0" stroke="#808080" stroke-width="2"/>
<line x1="240" y1="580.0" x2="270" y2="580.0" stroke="#808080" stroke-width="2"/>
<line x1="227" y1="585.5" x2="235" y2="585.5" stroke="#808080" stroke-width="1"/>
<line x1="240" y1="586.5" x2="248" y2="586.5" stroke="#808080" stroke-width="1"/>
<line x1="234.0" y1="586" x2="234.0" y2="617" stroke="#808080" stroke-width="2"/>
<line x1="276" y1="385.5" x2="389" y2="385.5" stroke="#c0c0c0" stroke-width="1"/>
<line x1="395" y1="385.5" x2="508" y2="385.5" stroke="#c0c0c0" stroke-width="1"/>
<line x1="304" y1="391.5" x2="389" y2="391.5" stroke="#808080" stroke-width="1"/>
<line x1="395" y1="391.5" x2="480" y2="391.5" stroke="#808080" stroke-width="1"/>
<line x1="318.6" y1="396.5" x2="390" y2="396.5" stroke="#808080" stroke-width="2"/>
<line x1="395" y1="396.5" x2="467" y2="396.5" stroke="#909090" stroke-width="2"/>
<line x1="339.5" y1="401.5" x2="390" y2="401.5" stroke="#808080" stroke-width="2"/>
<line x1="395" y1="401.5" x2="446" y2="401.5" stroke="#808080" stroke-width="2"/>
<line x1="374.6" y1="407.5" x2="390" y2="407.5" stroke="#808080" stroke-width="2"/>
<line x1="395" y1="407.5" x2="410.8" y2="407.5" stroke="#808080" stroke-width="2"/>
<line x1="381" y1="413.1" x2="389" y2="413.1" stroke="#808080" stroke-width="1"/>
<line x1="395" y1="413.1" x2="403" y2="413.1" stroke="#808080" stroke-width="1"/>
<line x1="388.0" y1="412" x2="388.0" y2="448" stroke="#808080" stroke-width="2"/>
<line x1="381" y1="416.8" x2="851" y2="416.8" stroke="#c0c0c0" stroke-width="1"/>
<line x1="430" y1="421.9" x2="614" y2="421.9" stroke="#c0c0c0" stroke-width="1"/>
<line x1="619" y1="421.9" x2="802" y2="421.9" stroke="#c0c0c0" stroke-width="1"/>
<line x1="451" y1="426.8" x2="614" y2="426.8" stroke="#c0c0c0" stroke-width="1"/>
<line x1="619" y1="426.8" x2="780" y2="426.8" stroke="#c0c0c0" stroke-width="1"/>
<line x1="472" y1="431.5" x2="614" y2="431.5" stroke="#c0c0c0" stroke-width="1"/>
<line x1="619" y1="431.5" x2="759" y2="431.5" stroke="#c0c0c0" stroke-width="1"/>
<line x1="493" y1="436.9" x2="614" y2="436.9" stroke="#c0c0c0" stroke-width="1"/>
<line x1="619" y1="436.9" x2="739" y2="436.9" stroke="#c0c0c0" stroke-width="1"/>
<line x1="501" y1="441.5" x2="614" y2="441.5" stroke="#808080" stroke-width="2"/>
<line x1="619" y1="441.5" x2="732" y2="441.5" stroke="#808080" stroke-width="2"/>
<line x1="528" y1="446.5" x2="614" y2="446.5" stroke="#c0c0c0" stroke-width="1"/>
<line x1="619" y1="446.5" x2="704" y2="446.5" stroke="#c0c0c0" stroke-width="1"/>
<line x1="577" y1="453.0" x2="614" y2="453.0" stroke="#c0c0c0" stroke-width="1"/>
<line x1="619" y1="453.0" x2="654" y2="453.0" stroke="#c0c0c0" stroke-width="1"/>
<line x1="592" y1="458.5" x2="614" y2="458.5" stroke="#808080" stroke-width="2"/>
<line x1="619" y1="458.5" x2="641" y2="458.5" stroke="#808080" stroke-width="2"/>
<line x1="597" y1="464.5" x2="614" y2="464.5" stroke="#c0c0c0" stroke-width="1"/>
<line x1="619" y1="464.5" x2="634" y2="464.5" stroke="#c0c0c0" stroke-width="1"/>
<line x1="606" y1="468.5" x2="620" y2="468.5" stroke="#808080" stroke-width="1"/>
<line x1="612.5" y1="468" x2="612.5" y2="503" stroke="#808080" stroke-width="2"/>
<line x1="542" y1="511.5" x2="613" y2="511.5" stroke="#c0c0c0" stroke-width="1"/>
<line x1="472" y1="515.5" x2="613" y2="515.5" stroke="#c0c0c0" stroke-width="1"/>
<line x1="501" y1="521.5" x2="584" y2="521.5" stroke="#808080" stroke-width="1"/>
<line x1="513" y1="526.5" x2="570" y2="526.5" stroke="#808080" stroke-width="1"/>
<line x1="528" y1="532.5" x2="556" y2="532.5" stroke="#808080" stroke-width="1"/>
<line x1="542.0" y1="532" x2="542.0" y2="566" stroke="#808080" stroke-width="2"/>
<line x1="585" y1="525.5" x2="739" y2="525.5" stroke="#c0c0c0" stroke-width="1"/>
<line x1="640" y1="531.5" x2="682" y2="531.5" stroke="#808080" stroke-width="1"/>
<line x1="647" y1="537.5" x2="675" y2="537.5" stroke="#808080" stroke-width="1"/>
<line x1="661.5" y1="537" x2="661.5" y2="569" stroke="#808080" stroke-width="2"/>
<line x1="78" y1="315" x2="400" y2="214" stroke="#ff00ff" stroke-width="1"/>
<line x1="455" y1="203" x2="607" y2="252" stroke="#ff00ff" stroke-width="1"/>
<line x1="78" y1="395" x2="600" y2="307" stroke="#ff00ff" stroke-width="1"/>
<line x1="78" y1="432" x2="560" y2="271" stroke="#ff00ff" stroke-width="1"/>
<line x1="78" y1="361" x2="230" y2="313" stroke="#ff00ff" stroke-width="1"/>
<line x1="592" y1="352" x2="829" y2="276" stroke="#ff00ff" stroke-width="1"/>
<line x1="538" y1="280" x2="642" y2="246" stroke="#ff00ff" stroke-width="1"/>
<line x1="78" y1="373" x2="151" y2="393.5" stroke="#ff00ff" stroke-width="1"/>
<line x1="78" y1="419" x2="151" y2="442" stroke="#ff00ff" stroke-width="1"/>
<line x1="229" y1="309" x2="272" y2="319" stroke="#ff00ff" stroke-width="1"/>
<line x1="612" y1="270" x2="661" y2="283" stroke="#ff00ff" stroke-width="1"/>
<polyline points="80.0,321.9 87.0,318.8 94.0,318.6 101.0,316.6 108.0,315.2 115.0,313.6 122.0,311.6 129.0,309.3 136.0,306.7 143.0,304.1 150.0,301.5 157.0,297.8 164.0,294.3 171.0,290.9 178.0,287.1 185.0,284.1 192.0,280.3 199.0,276.3 206.0,273.0 213.0,269.3 220.0,265.3 227.0,262.3 234.0,259.6 241.0,256.7 248.0,253.5 255.0,249.8 262.0,245.6 269.0,241.5 276.0,238.2 283.0,235.1 290.0,231.5 297.0,229.3 304.0,228.3 311.0,226.0 318.0,224.7 325.0,221.6 332.0,219.6 339.0,218.2 346.0,216.2 353.0,214.1 360.0,211.2 367.0,207.1 374.0,200.6 381.0,197.0 388.0,195.8 395.0,194.7 402.0,193.8 409.0,192.2 416.0,189.7 423.0,186.9 430.0,185.4 437.0,182.1 444.0,178.0 451.0,175.1 458.0,171.6 465.0,168.4 472.0,165.5 479.0,163.0 486.0,160.7 493.0,159.4 500.0,159.5 507.0,159.5 514.0,160.5 521.0,159.6 528.0,157.4 535.0,156.6 542.0,159.1 549.0,162.7 556.0,165.4 563.0,166.7 570.0,167.2 577.0,169.1 584.0,174.2 591.0,179.0 598.0,185.3 605.0,190.5 612.0,197.3 619.0,202.4 626.0,206.8 633.0,209.5 640.0,211.5 647.0,214.6 654.0,217.3 661.0,220.7 668.0,221.7 675.0,220.6 682.0,216.9 689.0,212.0 696.0,208.0 703.0,205.0 710.0,202.4 717.0,198.8 724.0,192.4 731.0,186.8 738.0,178.4 745.0,171.1 752.0,162.0 759.0,153.7 766.0,145.1 773.0,136.9 780.0,128.0" fill="none" stroke="#a0a0a0" stroke-width="2.5" stroke-linejoin="round" />
<polyline points="80.0,471.3 87.0,468.4 94.0,468.2 101.0,466.3 108.0,465.0 115.0,463.5 122.0,461.6 129.0,459.4 136.0,457.0 143.0,454.6 150.0,452.1 157.0,448.7 164.0,445.3 171.0,442.1 178.0,438.6 185.0,435.8 192.0,432.2 199.0,428.5 206.0,425.4 213.0,421.9 220.0,418.1 227.0,415.3 234.0,412.8 241.0,410.1 248.0,407.0 255.0,403.6 262.0,399.6 269.0,395.7 276.0,392.7 283.0,389.7 290.0,386.4 297.0,384.3 304.0,383.4 311.0,381.2 318.0,380.0 325.0,377.0 332.0,375.2 339.0,373.9 346.0,372.1 353.0,370.1 360.0,367.3 367.0,363.5 374.0,357.4 381.0,354.0 388.0,352.9 395.0,351.8 402.0,351.0 409.0,349.4 416.0,347.1 423.0,344.5 430.0,343.1 437.0,340.0 444.0,336.1 451.0,333.4 458.0,330.1 465.0,327.2 472.0,324.4 479.0,322.1 486.0,319.9 493.0,318.7 500.0,318.8 507.0,318.7 514.0,319.7 521.0,318.8 528.0,316.8 535.0,316.1 542.0,318.4 549.0,321.8 556.0,324.3 563.0,325.6 570.0,326.0 577.0,327.8 584.0,332.6 591.0,337.1 598.0,343.0 605.0,347.9 612.0,354.3 619.0,359.1 626.0,363.2 633.0,365.7 640.0,367.6 647.0,370.5 654.0,373.0 661.0,376.2 668.0,377.2 675.0,376.2 682.0,372.6 689.0,368.1 696.0,364.3 703.0,361.5 710.0,359.1 717.0,355.7 724.0,349.6 731.0,344.4 738.0,336.5 745.0,329.7 752.0,321.2 759.0,313.4 766.0,305.3 773.0,297.6 780.0,289.2" fill="none" stroke="#a0a0a0" stroke-width="2.5" stroke-linejoin="round" />
<polyline points="80.0,332.4 87.0,330.6 94.0,330.1 101.0,328.3 108.0,326.1 115.0,324.2 122.0,321.8 129.0,319.1 136.0,316.4 143.0,313.8 150.0,311.1 157.0,308.1 164.0,304.5 171.0,301.2 178.0,297.7 185.0,295.1 192.0,291.6 199.0,287.9 206.0,284.7 213.0,281.5 220.0,278.6 227.0,276.6 234.0,276.1 241.0,274.2 248.0,271.7 255.0,269.1 262.0,265.6 269.0,262.1 276.0,259.1 283.0,256.2 290.0,253.1 297.0,250.6 304.0,248.3 311.0,245.3 318.0,242.9 325.0,240.0 332.0,237.1 339.0,234.4 346.0,231.7 353.0,228.8 360.0,225.8 367.0,222.7 374.0,219.5 381.0,217.0 388.0,215.7 395.0,214.2 402.0,212.1 409.0,209.3 416.0,206.4 423.0,203.4 430.0,201.1 437.0,198.1 444.0,194.7 451.0,191.6 458.0,188.6 465.0,185.4 472.0,182.3 479.0,179.7 486.0,177.3 493.0,175.4 500.0,174.0 507.0,172.8 514.0,172.1 521.0,170.6 528.0,169.4 535.0,169.0 542.0,170.2 549.0,171.5 556.0,171.8 563.0,171.0 570.0,170.1 577.0,169.5 584.0,170.8 591.0,171.9 598.0,174.1 605.0,175.1 612.0,177.3 619.0,178.5 626.0,179.2 633.0,179.2 640.0,179.4 647.0,180.1 654.0,181.1 661.0,181.7 668.0,180.8 675.0,179.3 682.0,177.5 689.0,175.0 696.0,172.3 703.0,169.5 710.0,166.8 717.0,163.8 724.0,160.7 731.0,158.1 738.0,154.8 745.0,151.4 752.0,147.9 759.0,144.2 766.0,140.0 773.0,135.6 780.0,131.0" fill="none" stroke="#ff0000" stroke-width="1" stroke-linejoin="round" />
<polyline points="80.0,366.0 85.7,366.7 93.9,367.8 102.7,368.7 110.0,369.0 114.9,369.0 118.5,368.8 122.1,367.6 127.0,365.0 133.8,360.2 141.8,353.6 149.8,346.5 157.0,340.0 162.4,334.7 166.9,329.9 171.6,324.6 178.0,318.0 187.2,308.3 198.1,296.6 209.0,285.8 218.0,279.0 224.2,277.9 228.9,280.6 232.8,284.5 237.0,287.0 241.5,287.9 245.9,288.4 250.3,288.2 255.0,287.0 260.1,284.0 265.5,279.7 270.9,275.2 276.0,272.0 280.6,270.7 284.9,270.4 289.2,270.3 294.0,269.5 299.1,267.7 304.5,265.5 310.4,262.9 317.0,260.0 325.1,256.5 334.4,252.5 343.4,248.5 351.0,245.0 356.5,241.7 360.6,238.4 364.2,236.0 368.0,235.0 372.2,236.2 376.3,239.1 380.3,242.5 384.0,245.0 387.3,246.6 390.4,247.8 393.2,248.6 396.0,249.0 398.4,249.2 400.6,249.1 402.9,248.4 406.0,247.0 410.1,244.6 415.0,241.5 420.1,237.9 425.0,234.0 429.6,229.6 434.1,224.8 438.6,220.0 443.0,216.0 447.2,213.1 451.4,210.9 455.6,209.0 460.0,207.0 464.3,204.6 468.5,202.0 473.5,199.7 480.0,198.0 489.4,197.0 500.9,196.6 512.2,196.6 521.0,197.0 526.4,198.3 529.6,200.4 532.1,202.0 535.0,202.0 538.5,199.2 541.9,194.6 545.6,189.9 550.0,187.0 555.4,186.7 561.4,187.9 567.8,189.6 574.0,191.0 580.4,191.8 586.9,192.4 593.1,193.1 598.0,194.0 601.1,194.7 603.0,195.4 604.6,196.6 607.0,199.0 610.4,203.2 614.3,208.7 618.6,214.4 623.0,219.5 627.8,223.6 632.9,227.3 638.1,230.7 643.0,234.0 647.6,237.3 652.0,240.6 656.2,243.6 660.0,246.0 663.2,248.2 665.9,250.2 668.7,251.3 672.0,251.0 675.7,249.8 679.6,247.8 684.2,243.6 690.0,236.0 697.7,222.8 706.8,205.4 716.0,187.5 724.0,173.0 729.8,163.8 734.4,157.4 739.1,151.6 745.0,144.0 753.6,132.6 763.8,119.2 773.4,106.7 780.0,98.0" fill="none" stroke="#800000" stroke-width="1" stroke-linejoin="round" />
<polyline points="80.0,349.0 87.0,351.7 94.0,364.1 101.0,361.2 108.0,355.2 115.0,352.0 122.0,345.2 129.0,338.0 136.0,331.3 143.0,326.6 150.0,322.4 157.0,315.3 164.0,304.4 171.0,298.8 178.0,292.3 185.0,295.1 192.0,287.6 199.0,279.8 206.0,277.5 213.0,275.0 220.0,276.1 227.0,283.1 234.0,300.8 241.0,300.3 248.0,293.2 255.0,286.8 262.0,274.1 269.0,263.6 276.0,260.6 283.0,258.7 290.0,253.9 297.0,255.3 304.0,257.8 311.0,252.6 318.0,253.0 325.0,248.2 332.0,243.7 339.0,241.4 346.0,239.1 353.0,235.4 360.0,230.5 367.0,225.8 374.0,220.5 381.0,222.9 388.0,233.7 395.0,239.8 402.0,237.1 409.0,228.0 416.0,220.7 423.0,213.9 430.0,214.4 437.0,207.2 444.0,198.7 451.0,194.2 458.0,191.0 465.0,186.3 472.0,183.6 479.0,184.6 486.0,186.5 493.0,191.7 500.0,201.7 507.0,206.5 514.0,214.6 521.0,212.8 528.0,212.9 535.0,220.8 542.0,240.4 549.0,254.1 556.0,255.3 563.0,246.0 570.0,238.6 577.0,236.0 584.0,251.4 591.0,260.5 598.0,276.4 605.0,277.6 612.0,289.1 619.0,288.2 626.0,284.2 633.0,274.6 640.0,269.9 647.0,272.4 654.0,276.1 661.0,276.1 668.0,261.9 675.0,246.1 682.0,232.7 689.0,217.5 696.0,204.2 703.0,192.7 710.0,186.0 717.0,177.4 724.0,170.1 731.0,169.6 738.0,160.8 745.0,153.2 752.0,146.5 759.0,138.9 766.0,128.1 773.0,117.1 780.0,106.5" fill="none" stroke="#ff8000" stroke-width="1" stroke-linejoin="round" />
<polyline points="80.0,415.8 87.0,418.5 94.0,430.5 101.0,427.7 108.0,421.9 115.0,418.8 122.0,412.2 129.0,405.2 136.0,398.6 143.0,394.1 150.0,390.0 157.0,383.1 164.0,372.5 171.0,367.0 178.0,360.7 185.0,363.4 192.0,356.2 199.0,348.6 206.0,346.3 213.0,343.9 220.0,345.0 227.0,351.7 234.0,369.0 241.0,368.5 248.0,361.6 255.0,355.3 262.0,343.0 269.0,332.8 276.0,329.9 283.0,328.0 290.0,323.4 297.0,324.8 304.0,327.1 311.0,322.1 318.0,322.5 325.0,317.9 332.0,313.4 339.0,311.2 346.0,308.9 353.0,305.4 360.0,300.6 367.0,296.1 374.0,290.9 381.0,293.3 388.0,303.7 395.0,309.7 402.0,307.0 409.0,298.2 416.0,291.1 423.0,284.5 430.0,285.0 437.0,278.0 444.0,269.7 451.0,265.4 458.0,262.2 465.0,257.7 472.0,255.0 479.0,256.0 486.0,257.8 493.0,262.9 500.0,272.7 507.0,277.3 514.0,285.2 521.0,283.4 528.0,283.6 535.0,291.2 542.0,310.2 549.0,323.6 556.0,324.8 563.0,315.7 570.0,308.5 577.0,305.9 584.0,321.0 591.0,329.8 598.0,345.2 605.0,346.4 612.0,357.6 619.0,356.7 626.0,352.8 633.0,343.5 640.0,338.9 647.0,341.4 654.0,345.0 661.0,345.0 668.0,331.2 675.0,315.8 682.0,302.8 689.0,288.0 696.0,275.0 703.0,263.9 710.0,257.3 717.0,249.0 724.0,241.9 731.0,241.4 738.0,232.8 745.0,225.4 752.0,219.0 759.0,211.5 766.0,201.0 773.0,190.4 780.0,180.1" fill="none" stroke="#ff8000" stroke-width="1" stroke-linejoin="round" />
<polyline points="80.0,394.3 87.0,391.3 94.0,391.0 101.0,389.1 108.0,387.7 115.0,386.2 122.0,384.2 129.0,381.9 136.0,379.5 143.0,377.0 150.0,374.4 157.0,370.9 164.0,367.4 171.0,364.1 178.0,360.4 185.0,357.5 192.0,353.9 199.0,350.0 206.0,346.8 213.0,343.2 220.0,339.3 227.0,336.3 234.0,333.7 241.0,331.0 248.0,327.8 255.0,324.2 262.0,320.1 269.0,316.1 276.0,313.0 283.0,309.9 290.0,306.5 297.0,304.4 304.0,303.4 311.0,301.1 318.0,299.9 325.0,296.8 332.0,294.9 339.0,293.6 346.0,291.7 353.0,289.6 360.0,286.8 367.0,282.8 374.0,276.5 381.0,273.0 388.0,271.8 395.0,270.8 402.0,269.9 409.0,268.3 416.0,265.9 423.0,263.2 430.0,261.8 437.0,258.5 444.0,254.5 451.0,251.7 458.0,248.3 465.0,245.3 472.0,242.5 479.0,240.0 486.0,237.8 493.0,236.5 500.0,236.6 507.0,236.6 514.0,237.6 521.0,236.7 528.0,234.6 535.0,233.8 542.0,236.2 549.0,239.7 556.0,242.3 563.0,243.6 570.0,244.1 577.0,245.9 584.0,250.9 591.0,255.5 598.0,261.6 605.0,266.7 612.0,273.3 619.0,278.3 626.0,282.5 633.0,285.1 640.0,287.0 647.0,290.1 654.0,292.7 661.0,296.0 668.0,297.0 675.0,295.9 682.0,292.3 689.0,287.6 696.0,283.6 703.0,280.8 710.0,278.3 717.0,274.8 724.0,268.5 731.0,263.1 738.0,254.9 745.0,247.9 752.0,239.1 759.0,231.0 766.0,222.6 773.0,214.7 780.0,206.1" fill="none" stroke="#00ffff" stroke-width="1" stroke-linejoin="round" />
<polyline points="80.0,403.7 87.0,400.7 94.0,400.5 101.0,398.6 108.0,397.2 115.0,395.7 122.0,393.7 129.0,391.5 136.0,389.0 143.0,386.5 150.0,384.0 157.0,380.4 164.0,377.0 171.0,373.7 178.0,370.0 185.0,367.2 192.0,363.5 199.0,359.6 206.0,356.4 213.0,352.8 220.0,349.0 227.0,346.0 234.0,343.5 241.0,340.7 248.0,337.5 255.0,334.0 262.0,329.9 269.0,325.9 276.0,322.8 283.0,319.8 290.0,316.3 297.0,314.2 304.0,313.2 311.0,311.0 318.0,309.7 325.0,306.7 332.0,304.8 339.0,303.5 346.0,301.6 353.0,299.5 360.0,296.7 367.0,292.7 374.0,286.5 381.0,283.0 388.0,281.8 395.0,280.7 402.0,279.9 409.0,278.3 416.0,275.9 423.0,273.2 430.0,271.8 437.0,268.6 444.0,264.6 451.0,261.8 458.0,258.4 465.0,255.3 472.0,252.6 479.0,250.1 486.0,247.9 493.0,246.6 500.0,246.7 507.0,246.7 514.0,247.7 521.0,246.8 528.0,244.7 535.0,244.0 542.0,246.3 549.0,249.8 556.0,252.4 563.0,253.7 570.0,254.1 577.0,256.0 584.0,261.0 591.0,265.5 598.0,271.6 605.0,276.7 612.0,283.3 619.0,288.2 626.0,292.4 633.0,295.1 640.0,297.0 647.0,300.0 654.0,302.6 661.0,305.9 668.0,306.9 675.0,305.8 682.0,302.2 689.0,297.5 696.0,293.6 703.0,290.7 710.0,288.2 717.0,284.7 724.0,278.5 731.0,273.1 738.0,265.0 745.0,258.0 752.0,249.2 759.0,241.2 766.0,232.8 773.0,224.9 780.0,216.3" fill="none" stroke="#00ffff" stroke-width="1" stroke-linejoin="round" />
<polyline points="80.0,399.0 87.0,396.0 94.0,395.8 101.0,393.9 108.0,392.5 115.0,390.9 122.0,389.0 129.0,386.7 136.0,384.3 143.0,381.7 150.0,379.2 157.0,375.6 164.0,372.2 171.0,368.9 178.0,365.2 185.0,362.4 192.0,358.7 199.0,354.8 206.0,351.6 213.0,348.0 220.0,344.2 227.0,341.2 234.0,338.6 241.0,335.8 248.0,332.7 255.0,329.1 262.0,325.0 269.0,321.0 276.0,317.9 283.0,314.8 290.0,311.4 297.0,309.3 304.0,308.3 311.0,306.1 318.0,304.8 325.0,301.8 332.0,299.9 339.0,298.5 346.0,296.6 353.0,294.6 360.0,291.7 367.0,287.8 374.0,281.5 381.0,278.0 388.0,276.8 395.0,275.7 402.0,274.9 409.0,273.3 416.0,270.9 423.0,268.2 430.0,266.8 437.0,263.6 444.0,259.6 451.0,256.8 458.0,253.3 465.0,250.3 472.0,247.5 479.0,245.0 486.0,242.9 493.0,241.6 500.0,241.6 507.0,241.6 514.0,242.7 521.0,241.7 528.0,239.7 535.0,238.9 542.0,241.3 549.0,244.8 556.0,247.4 563.0,248.7 570.0,249.1 577.0,251.0 584.0,255.9 591.0,260.5 598.0,266.6 605.0,271.7 612.0,278.3 619.0,283.2 626.0,287.5 633.0,290.1 640.0,292.0 647.0,295.0 654.0,297.6 661.0,300.9 668.0,301.9 675.0,300.8 682.0,297.2 689.0,292.6 696.0,288.6 703.0,285.8 710.0,283.2 717.0,279.8 724.0,273.5 731.0,268.1 738.0,259.9 745.0,252.9 752.0,244.1 759.0,236.1 766.0,227.7 773.0,219.8 780.0,211.2" fill="none" stroke="#ffff00" stroke-width="2.6" stroke-linejoin="round" />
<polyline points="80.0,399.0 87.0,396.0 94.0,395.8 101.0,393.9 108.0,392.5 115.0,390.9 122.0,389.0 129.0,386.7 136.0,384.3 143.0,381.7 150.0,379.2 157.0,375.6 164.0,372.2 171.0,368.9 178.0,365.2 185.0,362.4 192.0,358.7 199.0,354.8 206.0,351.6 213.0,348.0 220.0,344.2 227.0,341.2 234.0,338.6 241.0,335.8 248.0,332.7 255.0,329.1 262.0,325.0 269.0,321.0 276.0,317.9 283.0,314.8 290.0,311.4 297.0,309.3 304.0,308.3 311.0,306.1 318.0,304.8 325.0,301.8 332.0,299.9 339.0,298.5 346.0,296.6 353.0,294.6 360.0,291.7 367.0,287.8 374.0,281.5 381.0,278.0 388.0,276.8 395.0,275.7 402.0,274.9 409.0,273.3 416.0,270.9 423.0,268.2 430.0,266.8 437.0,263.6 444.0,259.6 451.0,256.8 458.0,253.3 465.0,250.3 472.0,247.5 479.0,245.0 486.0,242.9 493.0,241.6 500.0,241.6 507.0,241.6 514.0,242.7 521.0,241.7 528.0,239.7 535.0,238.9 542.0,241.3 549.0,244.8 556.0,247.4 563.0,248.7 570.0,249.1 577.0,251.0 584.0,255.9 591.0,260.5 598.0,266.6 605.0,271.7 612.0,278.3 619.0,283.2 626.0,287.5 633.0,290.1 640.0,292.0 647.0,295.0 654.0,297.6 661.0,300.9 668.0,301.9 675.0,300.8 682.0,297.2 689.0,292.6 696.0,288.6 703.0,285.8 710.0,283.2 717.0,279.8 724.0,273.5 731.0,268.1 738.0,259.9 745.0,252.9 752.0,244.1 759.0,236.1 766.0,227.7 773.0,219.8 780.0,211.2" fill="none" stroke="#008080" stroke-width="1" stroke-linejoin="round" />
<polyline points="80.0,376.4 87.0,379.1 94.0,391.4 101.0,388.5 108.0,382.6 115.0,379.5 122.0,372.7 129.0,365.6 136.0,359.0 143.0,354.3 150.0,350.1 157.0,343.1 164.0,332.4 171.0,326.8 178.0,320.4 185.0,323.1 192.0,315.8 199.0,308.0 206.0,305.8 213.0,303.3 220.0,304.4 227.0,311.3 234.0,328.8 241.0,328.3 248.0,321.3 255.0,314.9 262.0,302.4 269.0,292.0 276.0,289.0 283.0,287.2 290.0,282.5 297.0,283.8 304.0,286.3 311.0,281.1 318.0,281.5 325.0,276.8 332.0,272.3 339.0,270.1 346.0,267.8 353.0,264.1 360.0,259.3 367.0,254.7 374.0,249.4 381.0,251.8 388.0,262.5 395.0,268.5 402.0,265.8 409.0,256.8 416.0,249.6 423.0,242.9 430.0,243.4 437.0,236.3 444.0,227.9 451.0,223.5 458.0,220.2 465.0,215.7 472.0,212.9 479.0,213.9 486.0,215.8 493.0,220.9 500.0,230.9 507.0,235.6 514.0,243.6 521.0,241.8 528.0,241.9 535.0,249.7 542.0,269.1 549.0,282.6 556.0,283.9 563.0,274.6 570.0,267.3 577.0,264.7 584.0,280.0 591.0,288.9 598.0,304.7 605.0,305.8 612.0,317.3 619.0,316.4 626.0,312.4 633.0,302.9 640.0,298.2 647.0,300.7 654.0,304.4 661.0,304.4 668.0,290.3 675.0,274.8 682.0,261.5 689.0,246.4 696.0,233.3 703.0,221.9 710.0,215.3 717.0,206.8 724.0,199.6 731.0,199.1 738.0,190.4 745.0,182.9 752.0,176.3 759.0,168.7 766.0,158.0 773.0,147.2 780.0,136.7" fill="none" stroke="#ff00ff" stroke-width="1" stroke-linejoin="round" />
<polyline points="80.0,388.4 87.0,391.1 94.0,403.2 101.0,400.4 108.0,394.5 115.0,391.4 122.0,384.7 129.0,377.6 136.0,371.0 143.0,366.4 150.0,362.2 157.0,355.2 164.0,344.5 171.0,339.0 178.0,332.6 185.0,335.3 192.0,328.0 199.0,320.3 206.0,318.1 213.0,315.6 220.0,316.7 227.0,323.5 234.0,341.0 241.0,340.5 248.0,333.5 255.0,327.2 262.0,314.7 269.0,304.4 276.0,301.4 283.0,299.6 290.0,294.9 297.0,296.2 304.0,298.7 311.0,293.5 318.0,293.9 325.0,289.3 332.0,284.8 339.0,282.5 346.0,280.2 353.0,276.6 360.0,271.8 367.0,267.2 374.0,262.0 381.0,264.4 388.0,275.0 395.0,281.0 402.0,278.3 409.0,269.4 416.0,262.2 423.0,255.5 430.0,256.0 437.0,248.9 444.0,240.6 451.0,236.2 458.0,232.9 465.0,228.4 472.0,225.6 479.0,226.7 486.0,228.5 493.0,233.6 500.0,243.5 507.0,248.2 514.0,256.2 521.0,254.4 528.0,254.6 535.0,262.3 542.0,281.5 549.0,295.0 556.0,296.3 563.0,287.1 570.0,279.8 577.0,277.2 584.0,292.4 591.0,301.3 598.0,317.0 605.0,318.1 612.0,329.5 619.0,328.6 626.0,324.7 633.0,315.2 640.0,310.5 647.0,313.1 654.0,316.7 661.0,316.7 668.0,302.7 675.0,287.2 682.0,274.0 689.0,259.0 696.0,245.9 703.0,234.6 710.0,228.0 717.0,219.6 724.0,212.4 731.0,211.9 738.0,203.2 745.0,195.8 752.0,189.2 759.0,181.7 766.0,171.1 773.0,160.3 780.0,149.9" fill="none" stroke="#ff00ff" stroke-width="1" stroke-linejoin="round" />
<polyline points="80.0,382.4 87.0,385.1 94.0,397.3 101.0,394.5 108.0,388.5 115.0,385.4 122.0,378.7 129.0,371.6 136.0,365.0 143.0,360.3 150.0,356.2 157.0,349.2 164.0,338.4 171.0,332.9 178.0,326.5 185.0,329.2 192.0,321.9 199.0,314.2 206.0,311.9 213.0,309.5 220.0,310.5 227.0,317.4 234.0,334.9 241.0,334.4 248.0,327.4 255.0,321.1 262.0,308.5 269.0,298.2 276.0,295.2 283.0,293.4 290.0,288.7 297.0,290.0 304.0,292.5 311.0,287.3 318.0,287.7 325.0,283.1 332.0,278.5 339.0,276.3 346.0,274.0 353.0,270.4 360.0,265.5 367.0,260.9 374.0,255.7 381.0,258.1 388.0,268.7 395.0,274.7 402.0,272.0 409.0,263.1 416.0,255.9 423.0,249.2 430.0,249.7 437.0,242.6 444.0,234.2 451.0,229.8 458.0,226.6 465.0,222.0 472.0,219.3 479.0,220.3 486.0,222.1 493.0,227.3 500.0,237.2 507.0,241.9 514.0,249.9 521.0,248.1 528.0,248.3 535.0,256.0 542.0,275.3 549.0,288.8 556.0,290.1 563.0,280.9 570.0,273.5 577.0,270.9 584.0,286.2 591.0,295.1 598.0,310.8 605.0,312.0 612.0,323.4 619.0,322.5 626.0,318.5 633.0,309.1 640.0,304.4 647.0,306.9 654.0,310.6 661.0,310.5 668.0,296.5 675.0,281.0 682.0,267.8 689.0,252.7 696.0,239.6 703.0,228.3 710.0,221.7 717.0,213.2 724.0,206.0 731.0,205.5 738.0,196.8 745.0,189.3 752.0,182.8 759.0,175.2 766.0,164.5 773.0,153.8 780.0,143.3" fill="none" stroke="#00ff00" stroke-width="1" stroke-linejoin="round" />
<polyline points="80.7,435.0 81.9,433.3 83.6,430.8 85.8,428.0 88.5,425.6 91.9,423.4 96.0,421.3 100.1,419.5 104.0,418.0 106.9,417.1 109.3,416.5 112.2,416.2 116.6,416.0 123.7,415.9 132.5,415.9 141.3,416.0 148.0,416.0 151.6,415.8 153.3,415.4 154.6,415.2 157.0,415.5 161.3,416.6 166.5,418.4 171.7,420.0 176.0,421.0 178.6,420.9 180.3,420.1 182.1,419.2 185.0,418.6 189.7,418.9 195.4,419.6 201.4,420.1 207.0,419.4 212.2,417.2 217.3,414.1 222.0,410.5 226.0,407.0 228.8,403.9 230.7,400.8 232.5,397.5 235.0,394.0 238.3,390.0 242.0,385.6 246.2,381.1 251.0,377.0 256.7,373.2 263.2,369.6 269.9,366.1 276.0,363.0 281.0,360.1 285.4,357.3 290.1,354.9 296.0,353.0 303.9,351.8 313.1,351.1 322.5,350.6 331.0,350.0 338.5,349.3 345.5,348.6 351.8,347.8 357.0,347.0 361.0,346.4 363.9,345.8 366.1,344.9 368.0,343.0 369.4,339.8 370.2,335.7 370.9,331.2 372.0,327.0 373.6,322.9 375.5,318.8 377.6,315.0 380.0,312.0 382.5,310.0 385.2,308.8 388.3,307.9 392.0,307.0 396.4,305.9 401.4,305.0 406.7,304.1 412.0,303.5 416.8,303.3 421.4,303.4 426.6,303.4 433.0,303.0 441.1,302.0 450.4,300.7 460.2,299.0 470.0,297.0 479.9,294.5 490.2,291.5 500.1,288.5 509.0,286.0 516.8,283.4 523.8,280.8 529.9,279.3 535.0,280.0 538.8,284.3 541.4,291.1 543.5,298.4 546.0,304.0 548.6,307.3 551.1,309.5 554.0,310.9 558.0,312.0 563.8,312.1 571.0,311.3 578.2,310.9 584.0,312.0 587.9,315.4 590.8,320.3 593.2,325.8 596.0,331.0 599.3,336.1 602.8,341.4 606.3,346.2 610.0,350.0 613.5,352.4 617.0,353.8 621.0,354.6 626.0,355.0 632.9,354.9 641.1,354.1 649.2,353.2 656.0,353.0 660.5,353.3 663.5,353.9 666.5,355.1 671.0,357.0 677.6,360.2 685.6,364.5 693.7,368.8 701.0,372.0 707.0,374.4 712.4,376.4 717.6,377.2 723.0,376.0 728.9,372.0 734.9,365.7 740.8,358.8 746.0,353.0 750.2,348.7 753.8,345.0 757.2,341.6 761.0,338.0 765.9,333.9 771.4,329.6 776.5,325.7 780.0,323.0" fill="none" stroke="#000000" stroke-width="1" stroke-linejoin="round" />
<polyline points="80.0,437.4 87.0,435.7 94.0,435.1 101.0,433.4 108.0,431.4 115.0,429.5 122.0,427.2 129.0,424.7 136.0,422.1 143.0,419.5 150.0,417.0 157.0,414.1 164.0,410.6 171.0,407.5 178.0,404.1 185.0,401.7 192.0,398.3 199.0,394.8 206.0,391.7 213.0,388.6 220.0,385.9 227.0,384.0 234.0,383.5 241.0,381.7 248.0,379.3 255.0,376.8 262.0,373.5 269.0,370.1 276.0,367.2 283.0,364.5 290.0,361.5 297.0,359.0 304.0,356.9 311.0,354.1 318.0,351.7 325.0,349.0 332.0,346.2 339.0,343.6 346.0,341.0 353.0,338.2 360.0,335.3 367.0,332.4 374.0,329.3 381.0,327.0 388.0,325.7 395.0,324.3 402.0,322.3 409.0,319.5 416.0,316.8 423.0,314.0 430.0,311.7 437.0,308.8 444.0,305.6 451.0,302.6 458.0,299.7 465.0,296.7 472.0,293.8 479.0,291.2 486.0,288.9 493.0,287.1 500.0,285.8 507.0,284.6 514.0,284.0 521.0,282.6 528.0,281.4 535.0,281.0 542.0,282.2 549.0,283.4 556.0,283.7 563.0,282.9 570.0,282.1 577.0,281.5 584.0,282.8 591.0,283.8 598.0,285.9 605.0,286.9 612.0,288.9 619.0,290.1 626.0,290.8 633.0,290.8 640.0,290.9 647.0,291.6 654.0,292.6 661.0,293.2 668.0,292.3 675.0,290.8 682.0,289.1 689.0,286.8 696.0,284.2 703.0,281.4 710.0,278.9 717.0,276.0 724.0,273.0 731.0,270.6 738.0,267.4 745.0,264.1 752.0,260.8 759.0,257.3 766.0,253.3 773.0,249.0 780.0,244.6" fill="none" stroke="#000000" stroke-width="2.6" stroke-linejoin="round" />
<line x1="80.5" y1="373.6" x2="80.5" y2="401.4" stroke="#0000ff" stroke-width="1"/>
<rect x="78" y="375.3" width="5" height="14.2" fill="#0000ff"/>
<line x1="87.5" y1="384.6" x2="87.5" y2="405.0" stroke="#000000" stroke-width="1"/>
<line x1="85" y1="390.5" x2="90" y2="390.5" stroke="#000000" stroke-width="2"/>
<line x1="94.5" y1="400.1" x2="94.5" y2="422.9" stroke="#000000" stroke-width="1"/>
<rect x="92" y="400.1" width="5" height="21.6" fill="#000000"/>
<line x1="101.5" y1="388.0" x2="101.5" y2="417.8" stroke="#000000" stroke-width="1"/>
<rect x="99.5" y="388.8" width="4" height="29.0" fill="#fff" stroke="#000000" stroke-width="1"/>
<line x1="108.5" y1="371.3" x2="108.5" y2="393.1" stroke="#0000ff" stroke-width="1"/>
<rect x="106.5" y="376.6" width="4" height="12.3" fill="#fff" stroke="#0000ff" stroke-width="1"/>
<line x1="115.5" y1="370.9" x2="115.5" y2="379.5" stroke="#0000ff" stroke-width="1"/>
<rect x="113" y="375.0" width="5" height="4.2" fill="#0000ff"/>
<line x1="122.5" y1="362.6" x2="122.5" y2="370.7" stroke="#0000ff" stroke-width="1"/>
<rect x="120.5" y="365.3" width="4" height="5.4" fill="#fff" stroke="#0000ff" stroke-width="1"/>
<line x1="129.5" y1="354.3" x2="129.5" y2="362.7" stroke="#0000ff" stroke-width="1"/>
<rect x="127.5" y="357.3" width="4" height="3.5" fill="#fff" stroke="#0000ff" stroke-width="1"/>
<line x1="136.5" y1="350.9" x2="136.5" y2="360.7" stroke="#0000ff" stroke-width="1"/>
<rect x="134.5" y="351.7" width="4" height="3.2" fill="#fff" stroke="#0000ff" stroke-width="1"/>
<line x1="143.5" y1="346.1" x2="143.5" y2="353.7" stroke="#0000ff" stroke-width="1"/>
<line x1="141" y1="351.1" x2="146" y2="351.1" stroke="#0000ff" stroke-width="2"/>
<line x1="150.5" y1="345.1" x2="150.5" y2="353.2" stroke="#0000ff" stroke-width="1"/>
<rect x="148.5" y="347.8" width="4" height="3.9" fill="#fff" stroke="#0000ff" stroke-width="1"/>
<line x1="157.5" y1="334.8" x2="157.5" y2="346.0" stroke="#0000ff" stroke-width="1"/>
<rect x="155.5" y="335.2" width="4" height="10.8" fill="#fff" stroke="#0000ff" stroke-width="1"/>
<line x1="164.5" y1="315.2" x2="164.5" y2="331.4" stroke="#0000ff" stroke-width="1"/>
<rect x="162.5" y="316.9" width="4" height="14.5" fill="#fff" stroke="#0000ff" stroke-width="1"/>
<line x1="171.5" y1="314.6" x2="171.5" y2="338.3" stroke="#0000ff" stroke-width="1"/>
<rect x="169" y="314.6" width="5" height="7.3" fill="#0000ff"/>
<line x1="178.5" y1="311.6" x2="178.5" y2="329.7" stroke="#0000ff" stroke-width="1"/>
<rect x="176.5" y="313.7" width="4" height="4.0" fill="#fff" stroke="#0000ff" stroke-width="1"/>
<line x1="185.5" y1="329.0" x2="185.5" y2="352.4" stroke="#0000ff" stroke-width="1"/>
<line x1="183" y1="334.7" x2="188" y2="334.7" stroke="#0000ff" stroke-width="2"/>
<line x1="192.5" y1="306.1" x2="192.5" y2="329.9" stroke="#0000ff" stroke-width="1"/>
<rect x="190.5" y="307.2" width="4" height="22.6" fill="#fff" stroke="#0000ff" stroke-width="1"/>
<line x1="199.5" y1="297.6" x2="199.5" y2="310.4" stroke="#0000ff" stroke-width="1"/>
<rect x="197.5" y="298.7" width="4" height="6.9" fill="#fff" stroke="#0000ff" stroke-width="1"/>
<line x1="206.5" y1="294.4" x2="206.5" y2="308.7" stroke="#0000ff" stroke-width="1"/>
<rect x="204" y="300.7" width="5" height="6.7" fill="#0000ff"/>
<line x1="213.5" y1="293.6" x2="213.5" y2="311.3" stroke="#0000ff" stroke-width="1"/>
<rect x="211" y="301.3" width="5" height="3.3" fill="#0000ff"/>
<line x1="220.5" y1="307.5" x2="220.5" y2="323.5" stroke="#0000ff" stroke-width="1"/>
<rect x="218" y="307.5" width="5" height="5.1" fill="#0000ff"/>
<line x1="227.5" y1="304.1" x2="227.5" y2="333.7" stroke="#0000ff" stroke-width="1"/>
<rect x="225" y="308.4" width="5" height="22.7" fill="#0000ff"/>
<line x1="234.5" y1="348.5" x2="234.5" y2="384.1" stroke="#ff0000" stroke-width="1"/>
<rect x="232" y="348.5" width="5" height="21.4" fill="#ff0000"/>
<line x1="241.5" y1="325.7" x2="241.5" y2="367.8" stroke="#0000ff" stroke-width="1"/>
<rect x="239.5" y="333.4" width="4" height="32.7" fill="#fff" stroke="#0000ff" stroke-width="1"/>
<line x1="248.5" y1="312.8" x2="248.5" y2="328.9" stroke="#0000ff" stroke-width="1"/>
<rect x="246.5" y="313.4" width="4" height="15.5" fill="#fff" stroke="#0000ff" stroke-width="1"/>
<line x1="255.5" y1="307.1" x2="255.5" y2="318.2" stroke="#0000ff" stroke-width="1"/>
<rect x="253.5" y="308.4" width="4" height="3.5" fill="#fff" stroke="#0000ff" stroke-width="1"/>
<line x1="262.5" y1="281.5" x2="262.5" y2="300.7" stroke="#0000ff" stroke-width="1"/>
<rect x="260.5" y="283.4" width="4" height="17.2" fill="#fff" stroke="#0000ff" stroke-width="1"/>
<line x1="269.5" y1="277.3" x2="269.5" y2="287.0" stroke="#0000ff" stroke-width="1"/>
<rect x="267.5" y="277.5" width="4" height="7.2" fill="#fff" stroke="#0000ff" stroke-width="1"/>
<line x1="276.5" y1="280.8" x2="276.5" y2="305.6" stroke="#0000ff" stroke-width="1"/>
<rect x="274" y="280.8" width="5" height="8.4" fill="#0000ff"/>
<line x1="283.5" y1="281.4" x2="283.5" y2="297.4" stroke="#0000ff" stroke-width="1"/>
<line x1="281" y1="289.7" x2="286" y2="289.7" stroke="#0000ff" stroke-width="2"/>
<line x1="290.5" y1="273.2" x2="290.5" y2="288.1" stroke="#0000ff" stroke-width="1"/>
<rect x="288.5" y="279.3" width="4" height="8.8" fill="#fff" stroke="#0000ff" stroke-width="1"/>
<line x1="297.5" y1="283.2" x2="297.5" y2="295.9" stroke="#0000ff" stroke-width="1"/>
<line x1="295" y1="292.8" x2="300" y2="292.8" stroke="#0000ff" stroke-width="2"/>
<line x1="304.5" y1="277.6" x2="304.5" y2="298.6" stroke="#0000ff" stroke-width="1"/>
<rect x="302" y="286.2" width="5" height="11.1" fill="#0000ff"/>
<line x1="311.5" y1="276.7" x2="311.5" y2="305.3" stroke="#0000ff" stroke-width="1"/>
<rect x="309.5" y="277.0" width="4" height="17.1" fill="#fff" stroke="#0000ff" stroke-width="1"/>
<line x1="318.5" y1="281.0" x2="318.5" y2="290.0" stroke="#0000ff" stroke-width="1"/>
<rect x="316" y="281.1" width="5" height="7.5" fill="#0000ff"/>
<line x1="325.5" y1="273.3" x2="325.5" y2="288.4" stroke="#0000ff" stroke-width="1"/>
<rect x="323.5" y="273.7" width="4" height="13.6" fill="#fff" stroke="#0000ff" stroke-width="1"/>
<line x1="332.5" y1="267.1" x2="332.5" y2="273.7" stroke="#0000ff" stroke-width="1"/>
<rect x="330.5" y="269.5" width="4" height="4.2" fill="#fff" stroke="#0000ff" stroke-width="1"/>
<line x1="339.5" y1="267.9" x2="339.5" y2="276.1" stroke="#0000ff" stroke-width="1"/>
<rect x="337" y="268.8" width="5" height="3.1" fill="#0000ff"/>
<line x1="346.5" y1="264.6" x2="346.5" y2="273.2" stroke="#0000ff" stroke-width="1"/>
<line x1="344" y1="269.4" x2="349" y2="269.4" stroke="#0000ff" stroke-width="2"/>
<line x1="353.5" y1="262.2" x2="353.5" y2="269.6" stroke="#0000ff" stroke-width="1"/>
<rect x="351.5" y="263.2" width="4" height="3.1" fill="#fff" stroke="#0000ff" stroke-width="1"/>
<line x1="360.5" y1="255.3" x2="360.5" y2="269.8" stroke="#0000ff" stroke-width="1"/>
<rect x="358.5" y="255.8" width="4" height="8.3" fill="#fff" stroke="#0000ff" stroke-width="1"/>
<line x1="367.5" y1="251.5" x2="367.5" y2="255.8" stroke="#0000ff" stroke-width="1"/>
<rect x="365.5" y="251.8" width="4" height="1.8" fill="#fff" stroke="#0000ff" stroke-width="1"/>
<line x1="374.5" y1="244.8" x2="374.5" y2="268.9" stroke="#0000ff" stroke-width="1"/>
<rect x="372.5" y="245.2" width="4" height="10.2" fill="#fff" stroke="#0000ff" stroke-width="1"/>
<line x1="381.5" y1="255.1" x2="381.5" y2="280.0" stroke="#0000ff" stroke-width="1"/>
<rect x="379" y="255.1" width="5" height="7.9" fill="#0000ff"/>
<line x1="388.5" y1="259.5" x2="388.5" y2="291.4" stroke="#0000ff" stroke-width="1"/>
<rect x="386" y="267.0" width="5" height="22.9" fill="#0000ff"/>
<line x1="395.5" y1="279.6" x2="395.5" y2="308.3" stroke="#0000ff" stroke-width="1"/>
<rect x="393.5" y="286.8" width="4" height="13.2" fill="#fff" stroke="#0000ff" stroke-width="1"/>
<line x1="402.5" y1="265.1" x2="402.5" y2="286.2" stroke="#0000ff" stroke-width="1"/>
<rect x="400.5" y="266.6" width="4" height="17.5" fill="#fff" stroke="#0000ff" stroke-width="1"/>
<line x1="409.5" y1="239.4" x2="409.5" y2="261.7" stroke="#0000ff" stroke-width="1"/>
<rect x="407.5" y="245.3" width="4" height="16.5" fill="#fff" stroke="#0000ff" stroke-width="1"/>
<line x1="416.5" y1="237.8" x2="416.5" y2="243.7" stroke="#0000ff" stroke-width="1"/>
<line x1="414" y1="241.5" x2="419" y2="241.5" stroke="#0000ff" stroke-width="2"/>
<line x1="423.5" y1="232.8" x2="423.5" y2="241.8" stroke="#0000ff" stroke-width="1"/>
<rect x="421.5" y="235.9" width="4" height="3.2" fill="#fff" stroke="#0000ff" stroke-width="1"/>
<line x1="430.5" y1="236.0" x2="430.5" y2="251.2" stroke="#0000ff" stroke-width="1"/>
<rect x="428" y="237.2" width="5" height="13.4" fill="#0000ff"/>
<line x1="437.5" y1="226.2" x2="437.5" y2="248.3" stroke="#0000ff" stroke-width="1"/>
<rect x="435.5" y="228.4" width="4" height="19.9" fill="#fff" stroke="#0000ff" stroke-width="1"/>
<line x1="444.5" y1="212.7" x2="444.5" y2="226.0" stroke="#0000ff" stroke-width="1"/>
<rect x="442.5" y="217.5" width="4" height="8.5" fill="#fff" stroke="#0000ff" stroke-width="1"/>
<line x1="451.5" y1="216.0" x2="451.5" y2="224.8" stroke="#0000ff" stroke-width="1"/>
<rect x="449" y="217.0" width="5" height="4.0" fill="#0000ff"/>
<line x1="458.5" y1="212.8" x2="458.5" y2="221.3" stroke="#0000ff" stroke-width="1"/>
<rect x="456" y="217.5" width="5" height="2.7" fill="#0000ff"/>
<line x1="465.5" y1="207.9" x2="465.5" y2="219.8" stroke="#0000ff" stroke-width="1"/>
<line x1="463" y1="212.9" x2="468" y2="212.9" stroke="#0000ff" stroke-width="2"/>
<line x1="472.5" y1="210.4" x2="472.5" y2="221.7" stroke="#0000ff" stroke-width="1"/>
<rect x="470.5" y="213.8" width="4" height="1.7" fill="#fff" stroke="#0000ff" stroke-width="1"/>
<line x1="479.5" y1="213.8" x2="479.5" y2="226.4" stroke="#0000ff" stroke-width="1"/>
<rect x="477" y="213.8" width="5" height="8.7" fill="#0000ff"/>
<line x1="486.5" y1="221.4" x2="486.5" y2="237.1" stroke="#0000ff" stroke-width="1"/>
<rect x="484" y="223.5" width="5" height="2.3" fill="#0000ff"/>
<line x1="493.5" y1="216.9" x2="493.5" y2="238.2" stroke="#0000ff" stroke-width="1"/>
<rect x="491" y="226.4" width="5" height="11.1" fill="#0000ff"/>
<line x1="500.5" y1="222.2" x2="500.5" y2="257.6" stroke="#0000ff" stroke-width="1"/>
<rect x="498" y="229.8" width="5" height="27.2" fill="#0000ff"/>
<line x1="507.5" y1="237.7" x2="507.5" y2="264.3" stroke="#000000" stroke-width="1"/>
<rect x="505" y="247.9" width="5" height="3.4" fill="#000000"/>
<line x1="514.5" y1="241.8" x2="514.5" y2="270.1" stroke="#000000" stroke-width="1"/>
<rect x="512" y="245.4" width="5" height="20.4" fill="#000000"/>
<line x1="521.5" y1="241.1" x2="521.5" y2="268.5" stroke="#000000" stroke-width="1"/>
<rect x="519.5" y="244.6" width="4" height="18.7" fill="#fff" stroke="#000000" stroke-width="1"/>
<line x1="528.5" y1="241.7" x2="528.5" y2="265.4" stroke="#000000" stroke-width="1"/>
<rect x="526" y="246.6" width="5" height="1.9" fill="#000000"/>
<line x1="535.5" y1="249.8" x2="535.5" y2="274.4" stroke="#000000" stroke-width="1"/>
<rect x="533" y="250.8" width="5" height="20.7" fill="#000000"/>
<line x1="542.5" y1="288.4" x2="542.5" y2="343.1" stroke="#ff0000" stroke-width="1"/>
<rect x="540" y="288.4" width="5" height="25.5" fill="#ff0000"/>
<line x1="549.5" y1="293.0" x2="549.5" y2="319.4" stroke="#ff0000" stroke-width="1"/>
<rect x="547" y="304.5" width="5" height="11.4" fill="#ff0000"/>
<line x1="556.5" y1="280.6" x2="556.5" y2="308.4" stroke="#ff0000" stroke-width="1"/>
<rect x="554.5" y="292.5" width="4" height="15.9" fill="#fff" stroke="#ff0000" stroke-width="1"/>
<line x1="563.5" y1="253.2" x2="563.5" y2="286.3" stroke="#000000" stroke-width="1"/>
<rect x="561.5" y="262.5" width="4" height="23.8" fill="#fff" stroke="#000000" stroke-width="1"/>
<line x1="570.5" y1="254.5" x2="570.5" y2="273.0" stroke="#000000" stroke-width="1"/>
<rect x="568.5" y="258.8" width="4" height="9.8" fill="#fff" stroke="#000000" stroke-width="1"/>
<line x1="577.5" y1="257.8" x2="577.5" y2="269.7" stroke="#000000" stroke-width="1"/>
<line x1="575" y1="265.8" x2="580" y2="265.8" stroke="#000000" stroke-width="2"/>
<line x1="584.5" y1="279.1" x2="584.5" y2="320.3" stroke="#ff0000" stroke-width="1"/>
<rect x="582" y="279.1" width="5" height="37.7" fill="#ff0000"/>
<line x1="591.5" y1="298.2" x2="591.5" y2="315.4" stroke="#ff0000" stroke-width="1"/>
<rect x="589" y="311.3" width="5" height="1.7" fill="#ff0000"/>
<line x1="598.5" y1="299.9" x2="598.5" y2="342.9" stroke="#ff0000" stroke-width="1"/>
<rect x="596" y="306.6" width="5" height="35.6" fill="#ff0000"/>
<line x1="605.5" y1="304.1" x2="605.5" y2="352.9" stroke="#ff0000" stroke-width="1"/>
<rect x="603.5" y="314.3" width="4" height="22.5" fill="#fff" stroke="#ff0000" stroke-width="1"/>
<line x1="612.5" y1="315.2" x2="612.5" y2="358.3" stroke="#ff0000" stroke-width="1"/>
<rect x="610" y="318.9" width="5" height="27.3" fill="#ff0000"/>
<line x1="619.5" y1="307.4" x2="619.5" y2="340.9" stroke="#ff0000" stroke-width="1"/>
<rect x="617.5" y="320.7" width="4" height="20.2" fill="#fff" stroke="#ff0000" stroke-width="1"/>
<line x1="626.5" y1="309.5" x2="626.5" y2="351.8" stroke="#ff0000" stroke-width="1"/>
<rect x="624.5" y="310.6" width="4" height="24.8" fill="#fff" stroke="#ff0000" stroke-width="1"/>
<line x1="633.5" y1="273.2" x2="633.5" y2="299.2" stroke="#000000" stroke-width="1"/>
<rect x="631.5" y="290.2" width="4" height="9.0" fill="#fff" stroke="#000000" stroke-width="1"/>
<line x1="640.5" y1="283.3" x2="640.5" y2="297.8" stroke="#000000" stroke-width="1"/>
<rect x="638" y="286.4" width="5" height="8.5" fill="#000000"/>
<line x1="647.5" y1="281.1" x2="647.5" y2="312.3" stroke="#000000" stroke-width="1"/>
<rect x="645" y="298.3" width="5" height="13.7" fill="#000000"/>
<line x1="654.5" y1="304.2" x2="654.5" y2="322.7" stroke="#000000" stroke-width="1"/>
<rect x="652" y="307.9" width="5" height="10.0" fill="#000000"/>
<line x1="661.5" y1="305.4" x2="661.5" y2="329.6" stroke="#000000" stroke-width="1"/>
<rect x="659.5" y="310.5" width="4" height="3.3" fill="#fff" stroke="#000000" stroke-width="1"/>
<line x1="668.5" y1="267.7" x2="668.5" y2="297.5" stroke="#000000" stroke-width="1"/>
<rect x="666.5" y="268.5" width="4" height="29.0" fill="#fff" stroke="#000000" stroke-width="1"/>
<line x1="675.5" y1="247.3" x2="675.5" y2="263.2" stroke="#000000" stroke-width="1"/>
<rect x="673.5" y="249.9" width="4" height="13.3" fill="#fff" stroke="#000000" stroke-width="1"/>
<line x1="682.5" y1="240.1" x2="682.5" y2="263.3" stroke="#000000" stroke-width="1"/>
<rect x="680.5" y="241.4" width="4" height="12.8" fill="#fff" stroke="#000000" stroke-width="1"/>
<line x1="689.5" y1="222.2" x2="689.5" y2="235.7" stroke="#0000ff" stroke-width="1"/>
<rect x="687.5" y="222.7" width="4" height="12.6" fill="#fff" stroke="#0000ff" stroke-width="1"/>
<line x1="696.5" y1="210.7" x2="696.5" y2="220.0" stroke="#0000ff" stroke-width="1"/>
<rect x="694.5" y="213.3" width="4" height="6.6" fill="#fff" stroke="#0000ff" stroke-width="1"/>
<line x1="703.5" y1="204.7" x2="703.5" y2="218.6" stroke="#0000ff" stroke-width="1"/>
<rect x="701.5" y="205.7" width="4" height="9.9" fill="#fff" stroke="#0000ff" stroke-width="1"/>
<line x1="710.5" y1="200.1" x2="710.5" y2="220.2" stroke="#0000ff" stroke-width="1"/>
<line x1="708" y1="208.4" x2="713" y2="208.4" stroke="#0000ff" stroke-width="2"/>
<line x1="717.5" y1="192.8" x2="717.5" y2="212.7" stroke="#0000ff" stroke-width="1"/>
<rect x="715.5" y="196.3" width="4" height="7.2" fill="#fff" stroke="#0000ff" stroke-width="1"/>
<line x1="724.5" y1="178.2" x2="724.5" y2="194.7" stroke="#0000ff" stroke-width="1"/>
<rect x="722" y="189.4" width="5" height="2.2" fill="#0000ff"/>
<line x1="731.5" y1="186.1" x2="731.5" y2="204.6" stroke="#0000ff" stroke-width="1"/>
<rect x="729" y="188.5" width="5" height="16.1" fill="#0000ff"/>
<line x1="738.5" y1="178.7" x2="738.5" y2="198.3" stroke="#0000ff" stroke-width="1"/>
<rect x="736.5" y="179.4" width="4" height="18.9" fill="#fff" stroke="#0000ff" stroke-width="1"/>
<line x1="745.5" y1="172.8" x2="745.5" y2="195.6" stroke="#0000ff" stroke-width="1"/>
<rect x="743.5" y="174.3" width="4" height="18.3" fill="#fff" stroke="#0000ff" stroke-width="1"/>
<line x1="752.5" y1="165.9" x2="752.5" y2="180.1" stroke="#0000ff" stroke-width="1"/>
<rect x="750.5" y="169.7" width="4" height="1.7" fill="#fff" stroke="#0000ff" stroke-width="1"/>
<line x1="759.5" y1="157.5" x2="759.5" y2="169.8" stroke="#0000ff" stroke-width="1"/>
<rect x="757.5" y="160.1" width="4" height="9.8" fill="#fff" stroke="#0000ff" stroke-width="1"/>
<line x1="766.5" y1="141.6" x2="766.5" y2="165.4" stroke="#0000ff" stroke-width="1"/>
<rect x="764.5" y="143.2" width="4" height="16.9" fill="#fff" stroke="#0000ff" stroke-width="1"/>
<line x1="773.5" y1="130.6" x2="773.5" y2="142.1" stroke="#0000ff" stroke-width="1"/>
<rect x="771.5" y="132.2" width="4" height="9.7" fill="#fff" stroke="#0000ff" stroke-width="1"/>
<line x1="780.5" y1="110.6" x2="780.5" y2="131.5" stroke="#0000ff" stroke-width="1"/>
<line x1="778" y1="122.4" x2="783" y2="122.4" stroke="#0000ff" stroke-width="2"/>
<path d="M94 367V392M85 372L94 392L103 372" stroke="#ff0000" stroke-width="2.2" fill="none"/>
<path d="M234 288V313M225 293L234 313L243 293" stroke="#ff0000" stroke-width="2.2" fill="none"/>
<path d="M388 229V254M379 234L388 254L397 234" stroke="#ff0000" stroke-width="2.2" fill="none"/>
<path d="M500 193V218M491 198L500 218L509 198" stroke="#ff0000" stroke-width="2.2" fill="none"/>
<path d="M535 192V217M526 197L535 217L544 197" stroke="#ff0000" stroke-width="2.2" fill="none"/>
<path d="M584 215V240M575 220L584 240L593 220" stroke="#ff0000" stroke-width="2.2" fill="none"/>
<path d="M528 206V231M522 220L528 231L534 220" stroke="#ff0000" stroke-width="1" fill="none"/>
<path d="M612 266V291M606 280L612 291L618 280" stroke="#ff0000" stroke-width="1" fill="none"/>
<path d="M626 274V299M620 288L626 299L632 288" stroke="#ff0000" stroke-width="1" fill="none"/>
<path d="M654 265V290M648 279L654 290L660 279" stroke="#ff0000" stroke-width="1" fill="none"/>
<path d="M661 276V301M655 290L661 301L667 290" stroke="#ff0000" stroke-width="1" fill="none"/>
<path d="M80 331V356M71 336L80 356L89 336" stroke="#808080" stroke-width="2.2" fill="none"/>
<path d="M185 290V315M176 295L185 315L194 295" stroke="#808080" stroke-width="2.2" fill="none"/>
<path d="M226.5 271V296M217.5 276L226.5 296L235.5 276" stroke="#808080" stroke-width="2.2" fill="none"/>
<path d="M304 250V275M295 255L304 275L313 255" stroke="#808080" stroke-width="2.2" fill="none"/>
<path d="M493 185V210M484 190L493 210L502 190" stroke="#808080" stroke-width="2.2" fill="none"/>
<path d="M647 249V274M638 254L647 274L656 254" stroke="#808080" stroke-width="2.2" fill="none"/>
<path d="M94 317V342M88 331L94 342L100 331" stroke="#ff00ff" stroke-width="1" fill="none"/>
<path d="M242 267V292M236 281L242 292L248 281" stroke="#ff00ff" stroke-width="1" fill="none"/>
<path d="M304.5 220V245M298.5 234L304.5 245L310.5 234" stroke="#ff00ff" stroke-width="1" fill="none"/>
<path d="M346 216V241M340 230L346 241L352 230" stroke="#ff00ff" stroke-width="1" fill="none"/>
<path d="M382 196V221M376 210L382 221L388 210" stroke="#ff00ff" stroke-width="1" fill="none"/>
<path d="M523 150V175M517 164L523 175L529 164" stroke="#ff00ff" stroke-width="1" fill="none"/>
<path d="M655 150V175M649 164L655 175L661 164" stroke="#ff00ff" stroke-width="1" fill="none"/>
<path d="M724 98V123M718 112L724 123L730 112" stroke="#ff00ff" stroke-width="1" fill="none"/>
<path d="M829 98V123M823 112L829 123L835 112" stroke="#ff00ff" stroke-width="1" fill="none"/>
<path d="M172 274V299M166 288L172 299L178 288" stroke="#008080" stroke-width="1" fill="none"/>
<path d="M402 196V221M396 210L402 221L408 210" stroke="#008080" stroke-width="1" fill="none"/>
<path d="M437 187V212M431 201L437 212L443 201" stroke="#008080" stroke-width="1" fill="none"/>
<path d="M586 150V175M580 164L586 175L592 164" stroke="#008080" stroke-width="1" fill="none"/>
<path d="M724 129V154M718 143L724 154L730 143" stroke="#008080" stroke-width="1" fill="none"/>
<path d="M885 97V122M879 111L885 122L891 111" stroke="#008080" stroke-width="1" fill="none"/>
<path d="M100.5 475V443M91.0 463L100.5 443L110.0 463" stroke="#00ff00" stroke-width="2.4" fill="none"/>
<path d="M192 390V358M182.5 378L192 358L201.5 378" stroke="#00ff00" stroke-width="2.4" fill="none"/>
<path d="M248 415.5V383.5M238.5 403.5L248 383.5L257.5 403.5" stroke="#00ff00" stroke-width="2.4" fill="none"/>
<path d="M311 358V326M301.5 346L311 326L320.5 346" stroke="#00ff00" stroke-width="2.4" fill="none"/>
<path d="M401 348V316M391.5 336L401 316L410.5 336" stroke="#00ff00" stroke-width="2.4" fill="none"/>
<path d="M563 347V315M553.5 335L563 315L572.5 335" stroke="#00ff00" stroke-width="2.4" fill="none"/>
<path d="M626 392V360M616.5 380L626 360L635.5 380" stroke="#00ff00" stroke-width="2.4" fill="none"/>
<path d="M668 365V333M658.5 353L668 333L677.5 353" stroke="#00ff00" stroke-width="2.4" fill="none"/>
<path d="M241 430V400M235 413L241 400L247 413" stroke="#00ff00" stroke-width="1" fill="none"/>
<path d="M521 311V281M515 294L521 281L527 294" stroke="#00ff00" stroke-width="1" fill="none"/>
<path d="M556.5 362V332M550.5 345L556.5 332L562.5 345" stroke="#00ff00" stroke-width="1" fill="none"/>
<path d="M620 415V385M614 398L620 385L626 398" stroke="#00ff00" stroke-width="1" fill="none"/>
<path d="M892 747V720M886 733L892 720L898 733" stroke="#808080" stroke-width="1" fill="none"/>
<path d="M962 744V717M956 730L962 717L968 730" stroke="#808080" stroke-width="1" fill="none"/>
<line x1="829" y1="211.5" x2="886" y2="211.5" stroke="#ff0000" stroke-width="1"/>
<line x1="829" y1="358.5" x2="886" y2="358.5" stroke="#ff0000" stroke-width="1"/>
<line x1="829" y1="653.5" x2="886" y2="653.5" stroke="#ff0000" stroke-width="1"/></svg>
<div class="t" style="left:843px;top:192px;font-size:13px;color:#000;font-weight:bold;">4542</div>
<div class="t" style="left:850px;top:338px;font-size:13px;color:#000;font-weight:bold;">4280</div>
<div class="t" style="left:843px;top:636px;font-size:13px;color:#000;font-weight:bold;">3758</div>
<div class="t" style="left:948px;top:127px;font-size:13px;color:#000;font-weight:bold;">Next Echo and Pulse Highs</div>
<div class="t" style="left:948px;top:175px;font-size:13px;color:#000;font-weight:bold;">* S/T BUY SIGNAL *</div>
<div class="t" style="left:948px;top:191px;font-size:13px;color:#000;font-weight:bold;">* NO SHORT ALERT *</div>
<div class="t" style="left:949px;top:223px;font-size:13px;color:#000;font-weight:bold;">S/T BUY Signal at 4404 on 14 Oct</div>
<div class="t" style="left:948px;top:255px;font-size:13px;color:#000;font-weight:bold;">T volume Osc: positive on 01 Nov</div>
<div class="t" style="left:948px;top:271px;font-size:13px;color:#000;font-weight:bold;">Up</div>
<div class="t" style="left:948px;top:303px;font-size:13px;color:#000;font-weight:bold;">Osc: BUY Signal on 11 Oct</div>
<div class="t" style="left:948px;top:319px;font-size:13px;color:#000;font-weight:bold;">Up</div>
<div class="t" style="left:948px;top:399px;font-size:13px;color:#000;font-weight:bold;">Click here for</div>
<div class="t" style="left:948px;top:415px;font-size:13px;color:#000;font-weight:bold;">More Information...</div>
<div class="t" style="left:948px;top:687px;font-size:13px;color:#000;font-weight:bold;">Next Projected Low(s)</div>
<div class="t" style="left:669px;top:382px;font-size:13px;color:#000;font-weight:bold;">S/T BUY Signal</div>
<div class="t" style="left:619px;top:492px;font-size:13px;color:#000;font-weight:bold;">T Structure</div>
<div class="t" style="left:655px;top:579px;font-size:13px;color:#000;font-weight:bold;">Small T</div>
<div class="ab" style="left:1188px;top:97px;width:61px;height:653px;background:#d4d0c8;border:1px solid #000;border-bottom:none"></div>
<div class="ab" style="left:1189px;top:98px;width:59px;height:13px;background:#ffffe1;border-bottom:1px solid #000"></div>
<div class="t" style="left:1196px;top:99px;font-size:12.5px;color:#000;font-weight:bold;">4732.31</div>
<svg class="ab" style="left:0;top:0" width="1280" height="983" viewBox="0 0 1280 983" shape-rendering="crispEdges"><rect x="1190" y="121" width="7" height="1" fill="#000"/><rect x="1190" y="149" width="4" height="1" fill="#000"/><rect x="1190" y="177" width="7" height="1" fill="#000"/><rect x="1190" y="206" width="4" height="1" fill="#000"/><rect x="1190" y="234" width="7" height="1" fill="#000"/><rect x="1190" y="262" width="4" height="1" fill="#000"/><rect x="1190" y="290" width="7" height="1" fill="#000"/><rect x="1190" y="318" width="4" height="1" fill="#000"/><rect x="1190" y="346" width="7" height="1" fill="#000"/><rect x="1190" y="375" width="4" height="1" fill="#000"/><rect x="1190" y="403" width="7" height="1" fill="#000"/><rect x="1190" y="431" width="4" height="1" fill="#000"/><rect x="1190" y="459" width="7" height="1" fill="#000"/><rect x="1190" y="487" width="4" height="1" fill="#000"/><rect x="1190" y="516" width="7" height="1" fill="#000"/><rect x="1190" y="544" width="4" height="1" fill="#000"/><rect x="1190" y="572" width="7" height="1" fill="#000"/><rect x="1190" y="600" width="4" height="1" fill="#000"/><rect x="1190" y="628" width="7" height="1" fill="#000"/><rect x="1190" y="656" width="4" height="1" fill="#000"/><rect x="1190" y="685" width="7" height="1" fill="#000"/><rect x="1190" y="713" width="4" height="1" fill="#000"/><rect x="1190" y="741" width="7" height="1" fill="#000"/><rect x="1190" y="115" width="1" height="1" fill="#000"/><rect x="1190" y="121" width="1" height="1" fill="#000"/><rect x="1190" y="126" width="1" height="1" fill="#000"/><rect x="1190" y="132" width="1" height="1" fill="#000"/><rect x="1190" y="138" width="1" height="1" fill="#000"/><rect x="1190" y="143" width="1" height="1" fill="#000"/><rect x="1190" y="149" width="1" height="1" fill="#000"/><rect x="1190" y="154" width="1" height="1" fill="#000"/><rect x="1190" y="160" width="1" height="1" fill="#000"/><rect x="1190" y="166" width="1" height="1" fill="#000"/><rect x="1190" y="171" width="1" height="1" fill="#000"/><rect x="1190" y="177" width="1" height="1" fill="#000"/><rect x="1190" y="183" width="1" height="1" fill="#000"/><rect x="1190" y="188" width="1" height="1" fill="#000"/><rect x="1190" y="194" width="1" height="1" fill="#000"/><rect x="1190" y="200" width="1" height="1" fill="#000"/><rect x="1190" y="205" width="1" height="1" fill="#000"/><rect x="1190" y="211" width="1" height="1" fill="#000"/><rect x="1190" y="216" width="1" height="1" fill="#000"/><rect x="1190" y="222" width="1" height="1" fill="#000"/><rect x="1190" y="228" width="1" height="1" fill="#000"/><rect x="1190" y="233" width="1" height="1" fill="#000"/><rect x="1190" y="239" width="1" height="1" fill="#000"/><rect x="1190" y="245" width="1" height="1" fill="#000"/><rect x="1190" y="250" width="1" height="1" fill="#000"/><rect x="1190" y="256" width="1" height="1" fill="#000"/><rect x="1190" y="262" width="1" height="1" fill="#000"/><rect x="1190" y="267" width="1" height="1" fill="#000"/><rect x="1190" y="273" width="1" height="1" fill="#000"/><rect x="1190" y="278" width="1" height="1" fill="#000"/><rect x="1190" y="284" width="1" height="1" fill="#000"/><rect x="1190" y="290" width="1" height="1" fill="#000"/><rect x="1190" y="295" width="1" height="1" fill="#000"/><rect x="1190" y="301" width="1" height="1" fill="#000"/><rect x="1190" y="307" width="1" height="1" fill="#000"/><rect x="1190" y="312" width="1" height="1" fill="#000"/><rect x="1190" y="318" width="1" height="1" fill="#000"/><rect x="1190" y="324" width="1" height="1" fill="#000"/><rect x="1190" y="329" width="1" height="1" fill="#000"/><rect x="1190" y="335" width="1" height="1" fill="#000"/><rect x="1190" y="340" width="1" height="1" fill="#000"/><rect x="1190" y="346" width="1" height="1" fill="#000"/><rect x="1190" y="352" width="1" height="1" fill="#000"/><rect x="1190" y="357" width="1" height="1" fill="#000"/><rect x="1190" y="363" width="1" height="1" fill="#000"/><rect x="1190" y="369" width="1" height="1" fill="#000"/><rect x="1190" y="374" width="1" height="1" fill="#000"/><rect x="1190" y="380" width="1" height="1" fill="#000"/><rect x="1190" y="386" width="1" height="1" fill="#000"/><rect x="1190" y="391" width="1" height="1" fill="#000"/><rect x="1190" y="397" width="1" height="1" fill="#000"/><rect x="1190" y="402" width="1" height="1" fill="#000"/><rect x="1190" y="408" width="1" height="1" fill="#000"/><rect x="1190" y="414" width="1" height="1" fill="#000"/><rect x="1190" y="419" width="1" height="1" fill="#000"/><rect x="1190" y="425" width="1" height="1" fill="#000"/><rect x="1190" y="431" width="1" height="1" fill="#000"/><rect x="1190" y="436" width="1" height="1" fill="#000"/><rect x="1190" y="442" width="1" height="1" fill="#000"/><rect x="1190" y="448" width="1" height="1" fill="#000"/><rect x="1190" y="453" width="1" height="1" fill="#000"/><rect x="1190" y="459" width="1" height="1" fill="#000"/><rect x="1190" y="464" width="1" height="1" fill="#000"/><rect x="1190" y="470" width="1" height="1" fill="#000"/><rect x="1190" y="476" width="1" height="1" fill="#000"/><rect x="1190" y="481" width="1" height="1" fill="#000"/><rect x="1190" y="487" width="1" height="1" fill="#000"/><rect x="1190" y="493" width="1" height="1" fill="#000"/><rect x="1190" y="498" width="1" height="1" fill="#000"/><rect x="1190" y="504" width="1" height="1" fill="#000"/><rect x="1190" y="510" width="1" height="1" fill="#000"/><rect x="1190" y="515" width="1" height="1" fill="#000"/><rect x="1190" y="521" width="1" height="1" fill="#000"/><rect x="1190" y="526" width="1" height="1" fill="#000"/><rect x="1190" y="532" width="1" height="1" fill="#000"/><rect x="1190" y="538" width="1" height="1" fill="#000"/><rect x="1190" y="543" width="1" height="1" fill="#000"/><rect x="1190" y="549" width="1" height="1" fill="#000"/><rect x="1190" y="555" width="1" height="1" fill="#000"/><rect x="1190" y="560" width="1" height="1" fill="#000"/><rect x="1190" y="566" width="1" height="1" fill="#000"/><rect x="1190" y="572" width="1" height="1" fill="#000"/><rect x="1190" y="577" width="1" height="1" fill="#000"/><rect x="1190" y="583" width="1" height="1" fill="#000"/><rect x="1190" y="588" width="1" height="1" fill="#000"/><rect x="1190" y="594" width="1" height="1" fill="#000"/><rect x="1190" y="600" width="1" height="1" fill="#000"/><rect x="1190" y="605" width="1" height="1" fill="#000"/><rect x="1190" y="611" width="1" height="1" fill="#000"/><rect x="1190" y="617" width="1" height="1" fill="#000"/><rect x="1190" y="622" width="1" height="1" fill="#000"/><rect x="1190" y="628" width="1" height="1" fill="#000"/><rect x="1190" y="634" width="1" height="1" fill="#000"/><rect x="1190" y="639" width="1" height="1" fill="#000"/><rect x="1190" y="645" width="1" height="1" fill="#000"/><rect x="1190" y="650" width="1" height="1" fill="#000"/><rect x="1190" y="656" width="1" height="1" fill="#000"/><rect x="1190" y="662" width="1" height="1" fill="#000"/><rect x="1190" y="667" width="1" height="1" fill="#000"/><rect x="1190" y="673" width="1" height="1" fill="#000"/><rect x="1190" y="679" width="1" height="1" fill="#000"/><rect x="1190" y="684" width="1" height="1" fill="#000"/><rect x="1190" y="690" width="1" height="1" fill="#000"/><rect x="1190" y="696" width="1" height="1" fill="#000"/><rect x="1190" y="701" width="1" height="1" fill="#000"/><rect x="1190" y="707" width="1" height="1" fill="#000"/><rect x="1190" y="712" width="1" height="1" fill="#000"/><rect x="1190" y="718" width="1" height="1" fill="#000"/><rect x="1190" y="724" width="1" height="1" fill="#000"/><rect x="1190" y="729" width="1" height="1" fill="#000"/><rect x="1190" y="735" width="1" height="1" fill="#000"/><rect x="1190" y="741" width="1" height="1" fill="#000"/><rect x="1190" y="746" width="1" height="1" fill="#000"/></svg>
<div class="ab" style="left:1250px;top:567px;width:1px;height:183px;background:#fff;"></div>
<div class="t" style="left:1197px;top:115px;font-size:12.5px;color:#000;font-weight:bold;">4700.00</div>
<div class="t" style="left:1197px;top:171px;font-size:12.5px;color:#000;font-weight:bold;">4600.00</div>
<div class="t" style="left:1197px;top:228px;font-size:12.5px;color:#000;font-weight:bold;">4500.00</div>
<div class="t" style="left:1197px;top:284px;font-size:12.5px;color:#000;font-weight:bold;">4400.00</div>
<div class="t" style="left:1197px;top:340px;font-size:12.5px;color:#000;font-weight:bold;">4300.00</div>
<div class="t" style="left:1197px;top:397px;font-size:12.5px;color:#000;font-weight:bold;">4200.00</div>
<div class="t" style="left:1197px;top:453px;font-size:12.5px;color:#000;font-weight:bold;">4100.00</div>
<div class="t" style="left:1197px;top:510px;font-size:12.5px;color:#000;font-weight:bold;">4000.00</div>
<div class="t" style="left:1197px;top:566px;font-size:12.5px;color:#000;font-weight:bold;">3900.00</div>
<div class="t" style="left:1197px;top:622px;font-size:12.5px;color:#000;font-weight:bold;">3800.00</div>
<div class="t" style="left:1197px;top:679px;font-size:12.5px;color:#000;font-weight:bold;">3700.00</div>
<div class="t" style="left:1197px;top:736px;font-size:12.5px;color:#000;font-weight:bold;">3600</div>
<div class="btn" style="left:1225px;top:733px;width:22px;height:15px;background:#808080;border-color:#fff #404040 #404040 #fff"><svg class="ic" width="20" height="13"><path d="M10 2V12M4 4H16M4 4L1 9H7ZM16 4L13 9H19Z" stroke="#ff0" fill="none"/><path d="M1 9H7M13 9H19" stroke="#ff0" stroke-width="1.5"/></svg></div>
<div class="ab" style="left:76px;top:751px;width:1173px;height:1px;background:#fff;"></div>
<div class="ab" style="left:76px;top:753px;width:1113px;height:1px;background:#808080;"></div>
<div class="ab" style="left:76px;top:753px;width:1px;height:186px;background:#808080;"></div>
<div class="ab" style="left:77px;top:754px;width:1112px;height:167px;background:#fff;border-top:1px solid #000;border-left:1px solid #000"></div>
<div class="t" style="left:78px;top:757px;font-size:12.5px;color:#000;font-weight:bold;">Osc 5,35</div>
<svg class="ab" style="left:78px;top:755px" width="1110" height="165" viewBox="78 755 1110 165" shape-rendering="crispEdges"><line x1="80.5" y1="856.5" x2="80.5" y2="829.3" stroke="#0000ff" stroke-width="1.3"/>
<line x1="87.5" y1="856.5" x2="87.5" y2="831.6" stroke="#0000ff" stroke-width="1.3"/>
<line x1="94.5" y1="856.5" x2="94.5" y2="839.4" stroke="#0000ff" stroke-width="1.3"/>
<line x1="101.5" y1="856.5" x2="101.5" y2="843.2" stroke="#0000ff" stroke-width="1.3"/>
<line x1="108.5" y1="856.5" x2="108.5" y2="844.0" stroke="#0000ff" stroke-width="1.3"/>
<line x1="115.5" y1="856.5" x2="115.5" y2="843.3" stroke="#0000ff" stroke-width="1.3"/>
<line x1="122.5" y1="856.5" x2="122.5" y2="840.1" stroke="#0000ff" stroke-width="1.3"/>
<line x1="129.5" y1="856.5" x2="129.5" y2="829.4" stroke="#0000ff" stroke-width="1.3"/>
<line x1="136.5" y1="856.5" x2="136.5" y2="823.4" stroke="#0000ff" stroke-width="1.3"/>
<line x1="143.5" y1="856.5" x2="143.5" y2="820.2" stroke="#0000ff" stroke-width="1.3"/>
<line x1="150.5" y1="856.5" x2="150.5" y2="816.6" stroke="#0000ff" stroke-width="1.3"/>
<line x1="157.5" y1="856.5" x2="157.5" y2="814.9" stroke="#0000ff" stroke-width="1.3"/>
<line x1="164.5" y1="856.5" x2="164.5" y2="811.0" stroke="#0000ff" stroke-width="1.3"/>
<line x1="171.5" y1="856.5" x2="171.5" y2="808.0" stroke="#0000ff" stroke-width="1.3"/>
<line x1="178.5" y1="856.5" x2="178.5" y2="804.0" stroke="#0000ff" stroke-width="1.3"/>
<line x1="185.5" y1="856.5" x2="185.5" y2="804.4" stroke="#0000ff" stroke-width="1.3"/>
<line x1="192.5" y1="856.5" x2="192.5" y2="803.0" stroke="#0000ff" stroke-width="1.3"/>
<line x1="199.5" y1="856.5" x2="199.5" y2="803.0" stroke="#0000ff" stroke-width="1.3"/>
<line x1="206.5" y1="856.5" x2="206.5" y2="803.5" stroke="#0000ff" stroke-width="1.3"/>
<line x1="213.5" y1="856.5" x2="213.5" y2="804.5" stroke="#0000ff" stroke-width="1.3"/>
<line x1="220.5" y1="856.5" x2="220.5" y2="803.0" stroke="#0000ff" stroke-width="1.3"/>
<line x1="227.5" y1="856.5" x2="227.5" y2="809.3" stroke="#0000ff" stroke-width="1.3"/>
<line x1="234.5" y1="856.5" x2="234.5" y2="823.3" stroke="#0000ff" stroke-width="1.3"/>
<line x1="241.5" y1="856.5" x2="241.5" y2="829.9" stroke="#0000ff" stroke-width="1.3"/>
<line x1="248.5" y1="856.5" x2="248.5" y2="833.8" stroke="#0000ff" stroke-width="1.3"/>
<line x1="255.5" y1="856.5" x2="255.5" y2="835.4" stroke="#0000ff" stroke-width="1.3"/>
<line x1="262.5" y1="856.5" x2="262.5" y2="829.9" stroke="#0000ff" stroke-width="1.3"/>
<line x1="269.5" y1="856.5" x2="269.5" y2="815.7" stroke="#0000ff" stroke-width="1.3"/>
<line x1="276.5" y1="856.5" x2="276.5" y2="810.1" stroke="#0000ff" stroke-width="1.3"/>
<line x1="283.5" y1="856.5" x2="283.5" y2="808.3" stroke="#0000ff" stroke-width="1.3"/>
<line x1="290.5" y1="856.5" x2="290.5" y2="805.9" stroke="#0000ff" stroke-width="1.3"/>
<line x1="297.5" y1="856.5" x2="297.5" y2="810.0" stroke="#0000ff" stroke-width="1.3"/>
<line x1="304.5" y1="856.5" x2="304.5" y2="815.7" stroke="#0000ff" stroke-width="1.3"/>
<line x1="311.5" y1="856.5" x2="311.5" y2="815.9" stroke="#0000ff" stroke-width="1.3"/>
<line x1="318.5" y1="856.5" x2="318.5" y2="818.0" stroke="#0000ff" stroke-width="1.3"/>
<line x1="325.5" y1="856.5" x2="325.5" y2="820.1" stroke="#0000ff" stroke-width="1.3"/>
<line x1="332.5" y1="856.5" x2="332.5" y2="819.0" stroke="#0000ff" stroke-width="1.3"/>
<line x1="339.5" y1="856.5" x2="339.5" y2="818.2" stroke="#0000ff" stroke-width="1.3"/>
<line x1="346.5" y1="856.5" x2="346.5" y2="819.9" stroke="#0000ff" stroke-width="1.3"/>
<line x1="353.5" y1="856.5" x2="353.5" y2="818.2" stroke="#0000ff" stroke-width="1.3"/>
<line x1="360.5" y1="856.5" x2="360.5" y2="818.2" stroke="#0000ff" stroke-width="1.3"/>
<line x1="367.5" y1="856.5" x2="367.5" y2="817.9" stroke="#0000ff" stroke-width="1.3"/>
<line x1="374.5" y1="856.5" x2="374.5" y2="816.0" stroke="#0000ff" stroke-width="1.3"/>
<line x1="381.5" y1="856.5" x2="381.5" y2="817.1" stroke="#0000ff" stroke-width="1.3"/>
<line x1="388.5" y1="856.5" x2="388.5" y2="823.7" stroke="#0000ff" stroke-width="1.3"/>
<line x1="395.5" y1="856.5" x2="395.5" y2="831.0" stroke="#0000ff" stroke-width="1.3"/>
<line x1="402.5" y1="856.5" x2="402.5" y2="835.5" stroke="#0000ff" stroke-width="1.3"/>
<line x1="409.5" y1="856.5" x2="409.5" y2="837.4" stroke="#0000ff" stroke-width="1.3"/>
<line x1="416.5" y1="856.5" x2="416.5" y2="835.6" stroke="#0000ff" stroke-width="1.3"/>
<line x1="423.5" y1="856.5" x2="423.5" y2="827.7" stroke="#0000ff" stroke-width="1.3"/>
<line x1="430.5" y1="856.5" x2="430.5" y2="823.2" stroke="#0000ff" stroke-width="1.3"/>
<line x1="437.5" y1="856.5" x2="437.5" y2="818.2" stroke="#0000ff" stroke-width="1.3"/>
<line x1="444.5" y1="856.5" x2="444.5" y2="815.3" stroke="#0000ff" stroke-width="1.3"/>
<line x1="451.5" y1="856.5" x2="451.5" y2="813.8" stroke="#0000ff" stroke-width="1.3"/>
<line x1="458.5" y1="856.5" x2="458.5" y2="813.1" stroke="#0000ff" stroke-width="1.3"/>
<line x1="465.5" y1="856.5" x2="465.5" y2="808.7" stroke="#0000ff" stroke-width="1.3"/>
<line x1="472.5" y1="856.5" x2="472.5" y2="809.1" stroke="#0000ff" stroke-width="1.3"/>
<line x1="479.5" y1="856.5" x2="479.5" y2="813.9" stroke="#0000ff" stroke-width="1.3"/>
<line x1="486.5" y1="856.5" x2="486.5" y2="817.7" stroke="#0000ff" stroke-width="1.3"/>
<line x1="493.5" y1="856.5" x2="493.5" y2="822.9" stroke="#0000ff" stroke-width="1.3"/>
<line x1="500.5" y1="856.5" x2="500.5" y2="832.4" stroke="#0000ff" stroke-width="1.3"/>
<line x1="507.5" y1="856.5" x2="507.5" y2="840.2" stroke="#0000ff" stroke-width="1.3"/>
<line x1="514.5" y1="856.5" x2="514.5" y2="848.5" stroke="#0000ff" stroke-width="1.3"/>
<line x1="521.5" y1="856.5" x2="521.5" y2="853.1" stroke="#0000ff" stroke-width="1.3"/>
<line x1="528.5" y1="856.5" x2="528.5" y2="856.2" stroke="#0000ff" stroke-width="1.3"/>
<line x1="535.5" y1="856.5" x2="535.5" y2="859.1" stroke="#0000ff" stroke-width="1.3"/>
<line x1="542.5" y1="856.5" x2="542.5" y2="870.1" stroke="#0000ff" stroke-width="1.3"/>
<line x1="549.5" y1="856.5" x2="549.5" y2="878.8" stroke="#0000ff" stroke-width="1.3"/>
<line x1="556.5" y1="856.5" x2="556.5" y2="887.3" stroke="#0000ff" stroke-width="1.3"/>
<line x1="563.5" y1="856.5" x2="563.5" y2="890.5" stroke="#0000ff" stroke-width="1.3"/>
<line x1="570.5" y1="856.5" x2="570.5" y2="888.6" stroke="#0000ff" stroke-width="1.3"/>
<line x1="577.5" y1="856.5" x2="577.5" y2="879.8" stroke="#0000ff" stroke-width="1.3"/>
<line x1="584.5" y1="856.5" x2="584.5" y2="878.8" stroke="#0000ff" stroke-width="1.3"/>
<line x1="591.5" y1="856.5" x2="591.5" y2="881.4" stroke="#0000ff" stroke-width="1.3"/>
<line x1="598.5" y1="856.5" x2="598.5" y2="894.0" stroke="#0000ff" stroke-width="1.3"/>
<line x1="605.5" y1="856.5" x2="605.5" y2="902.7" stroke="#0000ff" stroke-width="1.3"/>
<line x1="612.5" y1="856.5" x2="612.5" y2="915.1" stroke="#0000ff" stroke-width="1.3"/>
<line x1="619.5" y1="856.5" x2="619.5" y2="913.8" stroke="#0000ff" stroke-width="1.3"/>
<line x1="626.5" y1="856.5" x2="626.5" y2="912.1" stroke="#0000ff" stroke-width="1.3"/>
<line x1="633.5" y1="856.5" x2="633.5" y2="902.5" stroke="#0000ff" stroke-width="1.3"/>
<line x1="640.5" y1="856.5" x2="640.5" y2="898.7" stroke="#0000ff" stroke-width="1.3"/>
<line x1="647.5" y1="856.5" x2="647.5" y2="891.2" stroke="#0000ff" stroke-width="1.3"/>
<line x1="654.5" y1="856.5" x2="654.5" y2="888.8" stroke="#0000ff" stroke-width="1.3"/>
<line x1="661.5" y1="856.5" x2="661.5" y2="887.0" stroke="#0000ff" stroke-width="1.3"/>
<line x1="668.5" y1="856.5" x2="668.5" y2="882.1" stroke="#0000ff" stroke-width="1.3"/>
<line x1="675.5" y1="856.5" x2="675.5" y2="873.8" stroke="#0000ff" stroke-width="1.3"/>
<line x1="682.5" y1="856.5" x2="682.5" y2="860.4" stroke="#0000ff" stroke-width="1.3"/>
<line x1="689.5" y1="856.5" x2="689.5" y2="842.7" stroke="#0000ff" stroke-width="1.3"/>
<line x1="696.5" y1="856.5" x2="696.5" y2="825.0" stroke="#0000ff" stroke-width="1.3"/>
<line x1="703.5" y1="856.5" x2="703.5" y2="813.8" stroke="#0000ff" stroke-width="1.3"/>
<line x1="710.5" y1="856.5" x2="710.5" y2="806.2" stroke="#0000ff" stroke-width="1.3"/>
<line x1="717.5" y1="856.5" x2="717.5" y2="798.4" stroke="#0000ff" stroke-width="1.3"/>
<line x1="724.5" y1="856.5" x2="724.5" y2="793.5" stroke="#0000ff" stroke-width="1.3"/>
<line x1="731.5" y1="856.5" x2="731.5" y2="792.4" stroke="#0000ff" stroke-width="1.3"/>
<line x1="738.5" y1="856.5" x2="738.5" y2="789.1" stroke="#0000ff" stroke-width="1.3"/>
<line x1="745.5" y1="856.5" x2="745.5" y2="785.0" stroke="#0000ff" stroke-width="1.3"/>
<line x1="752.5" y1="856.5" x2="752.5" y2="782.2" stroke="#0000ff" stroke-width="1.3"/>
<line x1="759.5" y1="856.5" x2="759.5" y2="779.2" stroke="#0000ff" stroke-width="1.3"/>
<line x1="766.5" y1="856.5" x2="766.5" y2="770.5" stroke="#0000ff" stroke-width="1.3"/>
<line x1="773.5" y1="856.5" x2="773.5" y2="764.9" stroke="#0000ff" stroke-width="1.3"/>
<line x1="780.5" y1="856.5" x2="780.5" y2="759.3" stroke="#0000ff" stroke-width="1.3"/>
<polyline points="80.7,823.0 84.2,823.3 89.1,823.8 94.7,824.4 100.0,825.0 104.9,825.8 109.9,826.8 114.8,827.8 119.7,828.4 123.8,828.8 127.4,829.0 131.9,828.9 138.5,828.4 148.3,827.4 160.3,826.0 173.0,824.4 185.0,823.0 196.7,821.7 208.6,820.3 219.3,819.1 227.5,818.3 231.9,817.9 233.5,817.8 234.4,818.0 237.0,818.3 242.0,819.0 248.1,819.9 254.4,820.8 260.0,821.4 264.3,821.4 267.9,821.2 271.6,820.8 276.0,820.3 279.7,819.7 282.8,819.0 288.5,818.3 300.0,818.0 321.3,818.2 349.6,818.7 378.1,819.3 400.0,820.0 412.2,820.9 418.8,821.9 423.4,822.8 430.0,823.0 439.5,822.2 450.0,820.8 460.5,819.2 470.0,818.0 478.3,817.3 485.9,816.8 493.1,816.6 500.0,817.0 505.4,818.4 509.7,820.4 515.4,822.6 525.0,824.0 540.0,824.5 558.8,824.4 579.4,824.2 600.0,824.0 622.2,824.1 646.2,824.2 668.4,824.3 685.0,824.0 692.1,823.5 692.8,822.9 693.3,821.8 700.0,820.0 717.3,816.9 740.9,812.8 764.1,808.8 780.0,806.0" fill="none" stroke="#000" stroke-width="1" stroke-linejoin="round" />
<polyline points="80.0,891.0 530.0,891.0 545.0,887.5 590.0,887.0 620.0,890.0 640.0,893.0 660.0,891.0 690.0,888.7 780.0,888.7" fill="none" stroke="#000" stroke-width="1" stroke-linejoin="round" />
<path d="M93.5 777V815M84.1 794L93.5 815L102.9 794" stroke="#ff0000" stroke-width="2.4" fill="none"/>
<path d="M233.5 768V805M224.1 784L233.5 805L242.9 784" stroke="#ff0000" stroke-width="2.4" fill="none"/>
<path d="M325 771V809M315.6 788L325 809L334.4 788" stroke="#ff0000" stroke-width="2.4" fill="none"/>
<path d="M381 772V810M371.6 789L381 810L390.4 789" stroke="#ff0000" stroke-width="2.4" fill="none"/>
<path d="M492.5 776V814M483.1 793L492.5 814L501.9 793" stroke="#ff0000" stroke-width="2.4" fill="none"/>
<path d="M129 901V862M120 882L129 862L138 882" stroke="#00ff00" stroke-width="1.8" fill="none"/>
<path d="M275.5 895V857M266.5 877L275.5 857L284.5 877" stroke="#00ff00" stroke-width="1.8" fill="none"/>
<path d="M429.5 879V840M420.5 860L429.5 840L438.5 860" stroke="#00ff00" stroke-width="1.8" fill="none"/>
<path d="M646.8 911V873M637.8 893L646.8 873L655.8 893" stroke="#00ff00" stroke-width="1.8" fill="none"/></svg>
<div class="t" style="left:661px;top:899px;font-size:13px;color:#000;font-weight:bold;">Osc Buy Signal</div>
<div class="ab" style="left:1188px;top:754px;width:61px;height:167px;background:#d4d0c8;border:1px solid #000;border-bottom:none"></div>
<svg class="ab" style="left:0;top:0" width="1280" height="983" viewBox="0 0 1280 983" shape-rendering="crispEdges"><rect x="1190" y="804" width="7" height="1" fill="#000"/><rect x="1190" y="856" width="7" height="1" fill="#000"/><rect x="1190" y="908" width="7" height="1" fill="#000"/><rect x="1190" y="913" width="1" height="1" fill="#000"/><rect x="1190" y="908" width="1" height="1" fill="#000"/><rect x="1190" y="903" width="1" height="1" fill="#000"/><rect x="1190" y="898" width="1" height="1" fill="#000"/><rect x="1190" y="892" width="1" height="1" fill="#000"/><rect x="1190" y="887" width="1" height="1" fill="#000"/><rect x="1190" y="882" width="1" height="1" fill="#000"/><rect x="1190" y="877" width="1" height="1" fill="#000"/><rect x="1190" y="872" width="1" height="1" fill="#000"/><rect x="1190" y="866" width="1" height="1" fill="#000"/><rect x="1190" y="861" width="1" height="1" fill="#000"/><rect x="1190" y="856" width="1" height="1" fill="#000"/><rect x="1190" y="851" width="1" height="1" fill="#000"/><rect x="1190" y="846" width="1" height="1" fill="#000"/><rect x="1190" y="840" width="1" height="1" fill="#000"/><rect x="1190" y="835" width="1" height="1" fill="#000"/><rect x="1190" y="830" width="1" height="1" fill="#000"/><rect x="1190" y="825" width="1" height="1" fill="#000"/><rect x="1190" y="820" width="1" height="1" fill="#000"/><rect x="1190" y="814" width="1" height="1" fill="#000"/><rect x="1190" y="809" width="1" height="1" fill="#000"/><rect x="1190" y="804" width="1" height="1" fill="#000"/><rect x="1190" y="799" width="1" height="1" fill="#000"/><rect x="1190" y="794" width="1" height="1" fill="#000"/><rect x="1190" y="788" width="1" height="1" fill="#000"/><rect x="1190" y="783" width="1" height="1" fill="#000"/><rect x="1190" y="778" width="1" height="1" fill="#000"/><rect x="1190" y="773" width="1" height="1" fill="#000"/><rect x="1190" y="768" width="1" height="1" fill="#000"/><rect x="1190" y="778" width="4" height="1" fill="#000"/><rect x="1190" y="830" width="4" height="1" fill="#000"/><rect x="1190" y="882" width="4" height="1" fill="#000"/></svg>
<div class="t" style="left:1197px;top:798px;font-size:12.5px;color:#000;font-weight:bold;">100</div>
<div class="t" style="left:1197px;top:850px;font-size:12.5px;color:#000;font-weight:bold;">0</div>
<div class="t" style="left:1197px;top:900px;font-size:12.5px;color:#000;font-weight:bold;">-100</div>
<div class="ab" style="left:1189px;top:909px;width:59px;height:14px;background:#ffffe1;border-top:1px solid #000;border-bottom:1px solid #000"></div>
<div class="t" style="left:1204px;top:910px;font-size:12.5px;color:#000;font-weight:bold;">-120</div>
<div class="ab" style="left:77px;top:920px;width:1112px;height:19px;background:#d4d0c8;border-left:1px solid #000;border-top:1px solid #000"></div>
<div class="btn" style="left:79px;top:921px;width:15px;height:16px"><svg class="ic" width="14" height="13"><path d="M9 3L5 6.5L9 10Z" fill="#000"/></svg></div>
<div class="btn" style="left:95px;top:921px;width:16px;height:16px"><svg class="ic" width="14" height="13"><path d="M5 3L9 6.5L5 10Z" fill="#000"/></svg></div>
<svg class="ab" style="left:0;top:0" width="1280" height="983" viewBox="0 0 1280 983"><polygon points="168,921 172,937 207.5,937 212,921" fill="#d4d0c8" stroke="#000" stroke-width="1"/><polygon points="208,921 212,937 292.5,937 297,921" fill="#d4d0c8" stroke="#000" stroke-width="1"/><polygon points="293.3,921 297.3,937 376.5,937 381,921" fill="#d4d0c8" stroke="#000" stroke-width="1"/><polygon points="376.9,921 380.9,937 442.5,937 447,921" fill="#d4d0c8" stroke="#000" stroke-width="1"/><polygon points="442.5,921 446.5,937 500.5,937 505,921" fill="#d4d0c8" stroke="#000" stroke-width="1"/><polygon points="501,921 505,937 610.2,937 614.7,921" fill="#d4d0c8" stroke="#000" stroke-width="1"/><polygon points="112.6,921 119.7,937 169.4,937 173.5,921" fill="#fff" stroke="#000" stroke-width="1"/></svg>
<div class="ab" style="left:113px;top:920px;width:61px;height:1px;background:#fff;"></div>
<div class="t" style="left:122.3px;top:923.5px;font-size:11px;color:#000;letter-spacing:-0.13px">Osc 5,35</div>
<div class="t" style="left:176.5px;top:923.5px;font-size:11px;color:#000;letter-spacing:-0.79px">CCI 20</div>
<div class="t" style="left:217px;top:923.5px;font-size:11px;color:#000;letter-spacing:-0.31px">MACD 19, 39, 9</div>
<div class="t" style="left:302.5px;top:923.5px;font-size:11px;color:#000;letter-spacing:-0.14px">Money Flow 11</div>
<div class="t" style="left:386px;top:923.5px;font-size:11px;color:#000;letter-spacing:-0.3px">RSI 14, 7, 3</div>
<div class="t" style="left:450.7px;top:923.5px;font-size:11px;color:#000;letter-spacing:-0.34px">RSI 2, 7, 3</div>
<div class="t" style="left:510px;top:923.5px;font-size:11px;color:#000;letter-spacing:-0.18px">On Balance Volume</div>
<div class="ab" style="left:1188px;top:920px;width:61px;height:19px;background:#d4d0c8;border:1px solid #000"></div>
<div class="ab" style="left:77px;top:942px;width:1112px;height:22px;background:#d4d0c8;border:1px solid #000"></div>
<div class="ab" style="left:157px;top:945px;width:1px;height:17px;background:#000;"></div>
<div class="t" style="left:159px;top:948px;font-size:12.5px;color:#000;font-weight:bold;">Jul</div>
<div class="ab" style="left:304px;top:945px;width:1px;height:17px;background:#000;"></div>
<div class="t" style="left:306px;top:948px;font-size:12.5px;color:#000;font-weight:bold;">Aug</div>
<div class="ab" style="left:458px;top:945px;width:1px;height:17px;background:#000;"></div>
<div class="t" style="left:460px;top:948px;font-size:12.5px;color:#000;font-weight:bold;">Sep</div>
<div class="ab" style="left:605px;top:945px;width:1px;height:17px;background:#000;"></div>
<div class="t" style="left:607px;top:948px;font-size:12.5px;color:#000;font-weight:bold;">Oct</div>
<div class="ab" style="left:752px;top:945px;width:1px;height:17px;background:#000;"></div>
<div class="t" style="left:754px;top:948px;font-size:12.5px;color:#000;font-weight:bold;">Nov</div>
<div class="ab" style="left:332px;top:944px;width:56px;height:18px;background:#ffffe1;border:1px solid #000"></div>
<div class="t" style="left:336px;top:948px;font-size:12.5px;color:#000;font-weight:bold;">08/12/21</div>
<div class="ab" style="left:1188px;top:942px;width:61px;height:22px;background:#ffffe1;border:1px solid #000"></div>
<div class="t" style="left:1202px;top:947.5px;font-size:12.5px;color:#0000ff;font-weight:bold;">#2940</div>
<div class="ab" style="left:0px;top:965px;width:1280px;height:18px;background:#d4d0c8;"></div>
<div class="t" style="left:2px;top:970px;font-size:11px;color:#000;">For Help, press F1</div>
<div class="ab" style="left:955px;top:966px;width:325px;height:17px;background:#d4d0c8;border-left:1px solid #808080;border-top:1px solid #808080"></div>
<div class="t" style="left:956px;top:970px;font-size:11.4px;color:#000;">Page: 14 - SP 500 for blog</div>
</body></html>
